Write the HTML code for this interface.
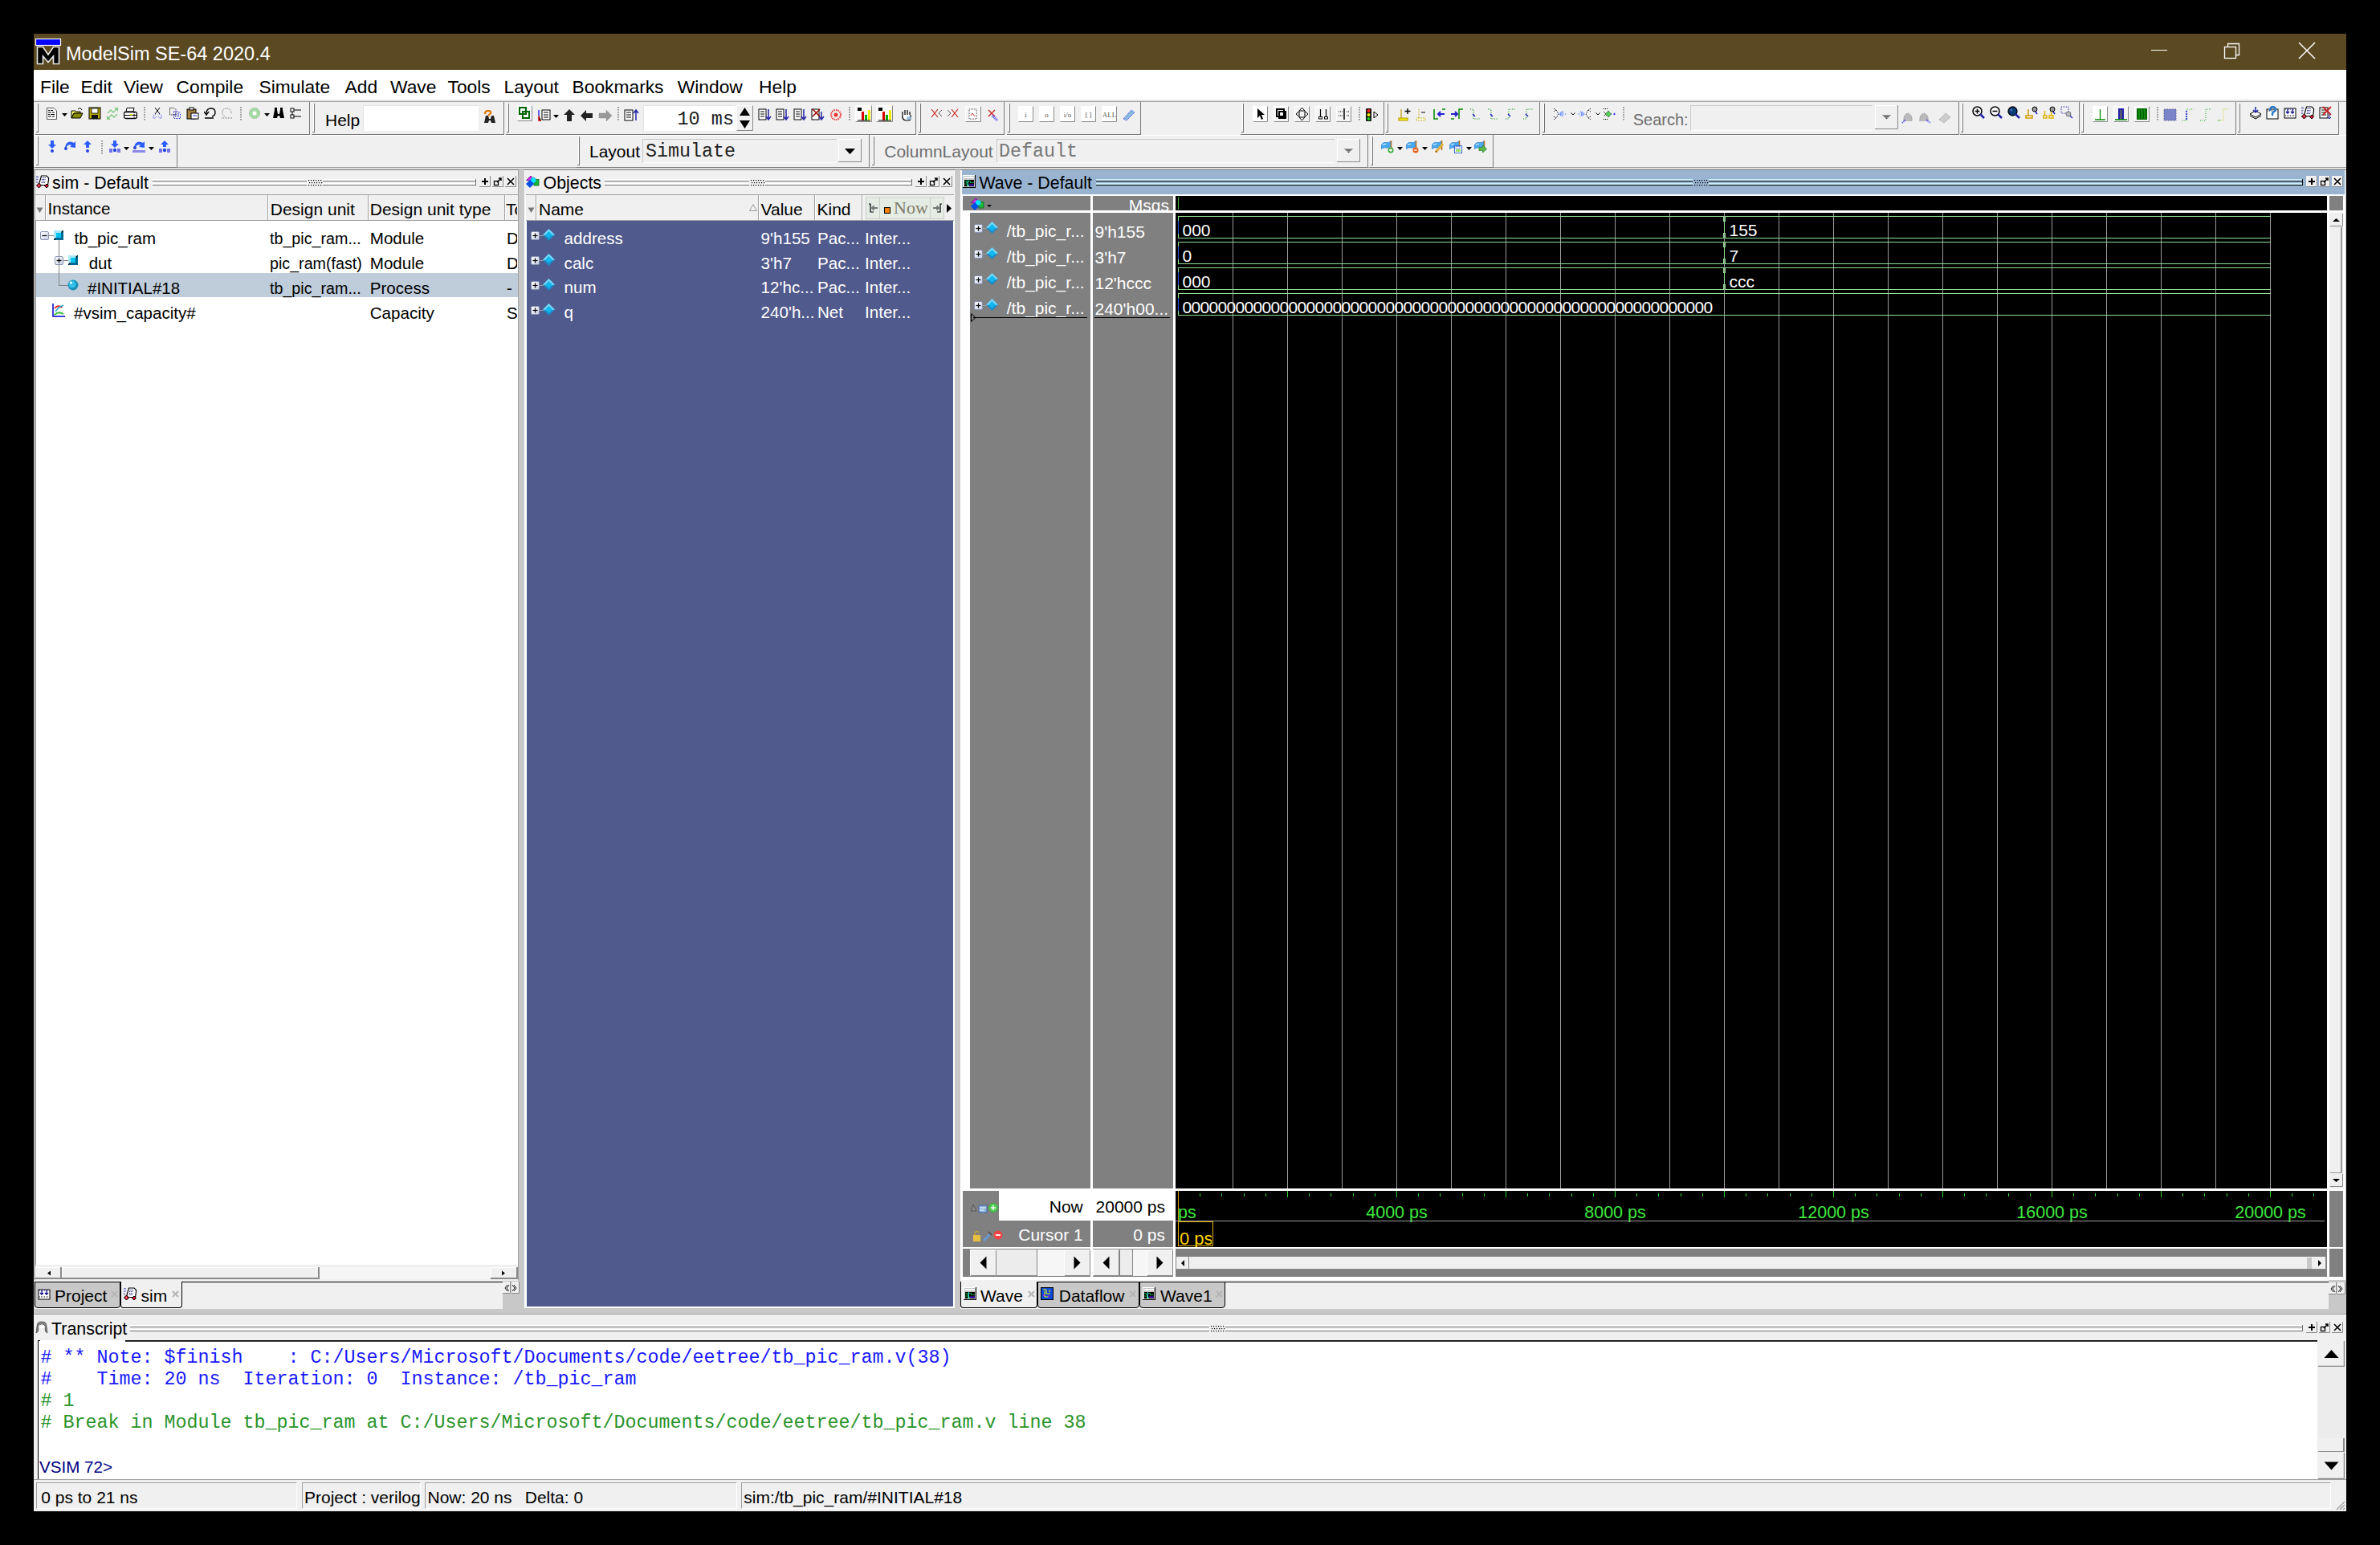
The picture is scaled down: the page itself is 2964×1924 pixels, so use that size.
<!DOCTYPE html><html><head><meta charset="utf-8"><style>
html,body{margin:0;padding:0;}
body{width:2964px;height:1924px;background:#000;position:relative;overflow:hidden;}
.a{position:absolute;}
.t{position:absolute;white-space:pre;}
</style></head><body>
<div class="a" style="left:42px;top:42px;width:2880px;height:1840px;background:#f0f0f0;"></div>
<div class="a" style="left:42px;top:42px;width:2880px;height:45px;background:#5b4922;"></div>
<svg class="a" style="left:44px;top:47px;" width="33" height="35" viewBox="0 0 33 35"><rect x="0.5" y="1.5" width="31" height="8" fill="#0000ff" stroke="#fff" stroke-width="1.2"/><path d="M2.5 11.5 H9.5 L16 21 L22.5 11.5 H29.5 V32.5 H22.5 V23 L16 30.5 L9.5 23 V32.5 H2.5 Z" fill="#000" stroke="#e6e6e6" stroke-width="1.6" stroke-linejoin="miter"/></svg>
<div class="t" style="top:55.86px;font-family:'Liberation Sans',sans-serif;font-size:23.5px;line-height:23.5px;color:#fff;left:82px;">ModelSim&nbsp;SE-64&nbsp;2020.4</div>
<div class="a" style="left:2679px;top:62px;width:20px;height:1px;background:#fff;"></div>
<svg class="a" style="left:2768px;top:52px;" width="24" height="24" viewBox="0 0 24 24"><rect x="2.5" y="6.5" width="14" height="14" fill="none" stroke="#fff" stroke-width="1.3"/><path d="M6.5 6.5 V2.5 H20.5 V16.5 H16.5" fill="none" stroke="#fff" stroke-width="1.3"/></svg>
<svg class="a" style="left:2861px;top:51px;" width="24" height="24" viewBox="0 0 24 24"><path d="M2 2 L22 22 M22 2 L2 22" stroke="#fff" stroke-width="1.5"/></svg>
<div class="a" style="left:42px;top:87px;width:2880px;height:37px;background:#fff;"></div>
<div class="a" style="left:42px;top:124px;width:2880px;height:2px;background:#e6e6e6;"></div>
<div class="t" style="top:97.46px;font-family:'Liberation Sans',sans-serif;font-size:22.8px;line-height:22.8px;color:#000;left:50px;">File</div>
<div class="t" style="top:97.46px;font-family:'Liberation Sans',sans-serif;font-size:22.8px;line-height:22.8px;color:#000;left:100.5px;">Edit</div>
<div class="t" style="top:97.46px;font-family:'Liberation Sans',sans-serif;font-size:22.8px;line-height:22.8px;color:#000;left:154px;">View</div>
<div class="t" style="top:97.46px;font-family:'Liberation Sans',sans-serif;font-size:22.8px;line-height:22.8px;color:#000;left:219.5px;">Compile</div>
<div class="t" style="top:97.46px;font-family:'Liberation Sans',sans-serif;font-size:22.8px;line-height:22.8px;color:#000;left:322.5px;">Simulate</div>
<div class="t" style="top:97.46px;font-family:'Liberation Sans',sans-serif;font-size:22.8px;line-height:22.8px;color:#000;left:429.5px;">Add</div>
<div class="t" style="top:97.46px;font-family:'Liberation Sans',sans-serif;font-size:22.8px;line-height:22.8px;color:#000;left:486px;">Wave</div>
<div class="t" style="top:97.46px;font-family:'Liberation Sans',sans-serif;font-size:22.8px;line-height:22.8px;color:#000;left:557.5px;">Tools</div>
<div class="t" style="top:97.46px;font-family:'Liberation Sans',sans-serif;font-size:22.8px;line-height:22.8px;color:#000;left:627.5px;">Layout</div>
<div class="t" style="top:97.46px;font-family:'Liberation Sans',sans-serif;font-size:22.8px;line-height:22.8px;color:#000;left:712.5px;">Bookmarks</div>
<div class="t" style="top:97.46px;font-family:'Liberation Sans',sans-serif;font-size:22.8px;line-height:22.8px;color:#000;left:843.75px;">Window</div>
<div class="t" style="top:97.46px;font-family:'Liberation Sans',sans-serif;font-size:22.8px;line-height:22.8px;color:#000;left:945px;">Help</div>
<div class="a" style="left:42px;top:126px;width:2880px;height:1px;background:#a0a0a0;"></div>
<div class="a" style="left:42px;top:127px;width:2880px;height:82px;background:#f0f0f0;"></div>
<div class="a" style="left:42px;top:168px;width:2880px;height:1px;background:#fff;"></div>
<div class="a" style="left:42px;top:208px;width:2880px;height:1px;background:#a0a0a0;"></div>
<div class="a" style="left:42px;top:209px;width:2880px;height:1px;background:#fff;"></div>
<div class="a" style="left:42px;top:210px;width:2880px;height:1px;background:#a0a0a0;"></div>
<div class="a" style="left:44px;top:167px;width:342px;height:1px;background:#7a7a7a;"></div>
<div class="a" style="left:385px;top:127px;width:1px;height:41px;background:#7a7a7a;"></div>
<div class="a" style="left:46px;top:129px;width:1px;height:36px;background:#fff;"></div>
<div class="a" style="left:47px;top:129px;width:1px;height:36px;background:#707070;"></div>
<div class="a" style="left:45px;top:164px;width:3px;height:1px;background:#707070;"></div>
<div class="a" style="left:387.5px;top:167px;width:240.5px;height:1px;background:#7a7a7a;"></div>
<div class="a" style="left:627px;top:127px;width:1px;height:41px;background:#7a7a7a;"></div>
<div class="a" style="left:389.5px;top:129px;width:1.0px;height:36px;background:#fff;"></div>
<div class="a" style="left:390.5px;top:129px;width:1.0px;height:36px;background:#707070;"></div>
<div class="a" style="left:388.5px;top:164px;width:3.0px;height:1px;background:#707070;"></div>
<div class="a" style="left:629.5px;top:167px;width:511.5px;height:1px;background:#7a7a7a;"></div>
<div class="a" style="left:1140px;top:127px;width:1px;height:41px;background:#7a7a7a;"></div>
<div class="a" style="left:631.5px;top:129px;width:1.0px;height:36px;background:#fff;"></div>
<div class="a" style="left:632.5px;top:129px;width:1.0px;height:36px;background:#707070;"></div>
<div class="a" style="left:630.5px;top:164px;width:3.0px;height:1px;background:#707070;"></div>
<div class="a" style="left:1143px;top:167px;width:108px;height:1px;background:#7a7a7a;"></div>
<div class="a" style="left:1250px;top:127px;width:1px;height:41px;background:#7a7a7a;"></div>
<div class="a" style="left:1145px;top:129px;width:1px;height:36px;background:#fff;"></div>
<div class="a" style="left:1146px;top:129px;width:1px;height:36px;background:#707070;"></div>
<div class="a" style="left:1144px;top:164px;width:3px;height:1px;background:#707070;"></div>
<div class="a" style="left:1253.75px;top:167px;width:167.25px;height:1px;background:#7a7a7a;"></div>
<div class="a" style="left:1420px;top:127px;width:1px;height:41px;background:#7a7a7a;"></div>
<div class="a" style="left:1255.75px;top:129px;width:1.0px;height:36px;background:#fff;"></div>
<div class="a" style="left:1256.75px;top:129px;width:1.0px;height:36px;background:#707070;"></div>
<div class="a" style="left:1254.75px;top:164px;width:3.0px;height:1px;background:#707070;"></div>
<div class="a" style="left:1545px;top:167px;width:179px;height:1px;background:#7a7a7a;"></div>
<div class="a" style="left:1723px;top:127px;width:1px;height:41px;background:#7a7a7a;"></div>
<div class="a" style="left:1547px;top:129px;width:1px;height:36px;background:#fff;"></div>
<div class="a" style="left:1548px;top:129px;width:1px;height:36px;background:#707070;"></div>
<div class="a" style="left:1546px;top:164px;width:3px;height:1px;background:#707070;"></div>
<div class="a" style="left:1725px;top:167px;width:193px;height:1px;background:#7a7a7a;"></div>
<div class="a" style="left:1917px;top:127px;width:1px;height:41px;background:#7a7a7a;"></div>
<div class="a" style="left:1727px;top:129px;width:1px;height:36px;background:#fff;"></div>
<div class="a" style="left:1728px;top:129px;width:1px;height:36px;background:#707070;"></div>
<div class="a" style="left:1726px;top:164px;width:3px;height:1px;background:#707070;"></div>
<div class="a" style="left:1920px;top:167px;width:519.5px;height:1px;background:#7a7a7a;"></div>
<div class="a" style="left:2438.5px;top:127px;width:1.0px;height:41px;background:#7a7a7a;"></div>
<div class="a" style="left:1922px;top:129px;width:1px;height:36px;background:#fff;"></div>
<div class="a" style="left:1923px;top:129px;width:1px;height:36px;background:#707070;"></div>
<div class="a" style="left:1921px;top:164px;width:3px;height:1px;background:#707070;"></div>
<div class="a" style="left:2441px;top:167px;width:148.5px;height:1px;background:#7a7a7a;"></div>
<div class="a" style="left:2588.5px;top:127px;width:1.0px;height:41px;background:#7a7a7a;"></div>
<div class="a" style="left:2443px;top:129px;width:1px;height:36px;background:#fff;"></div>
<div class="a" style="left:2444px;top:129px;width:1px;height:36px;background:#707070;"></div>
<div class="a" style="left:2442px;top:164px;width:3px;height:1px;background:#707070;"></div>
<div class="a" style="left:2591px;top:167px;width:193.5px;height:1px;background:#7a7a7a;"></div>
<div class="a" style="left:2783.5px;top:127px;width:1.0px;height:41px;background:#7a7a7a;"></div>
<div class="a" style="left:2593px;top:129px;width:1px;height:36px;background:#fff;"></div>
<div class="a" style="left:2594px;top:129px;width:1px;height:36px;background:#707070;"></div>
<div class="a" style="left:2592px;top:164px;width:3px;height:1px;background:#707070;"></div>
<div class="a" style="left:2786px;top:167px;width:127px;height:1px;background:#7a7a7a;"></div>
<div class="a" style="left:2912px;top:127px;width:1px;height:41px;background:#7a7a7a;"></div>
<div class="a" style="left:2788px;top:129px;width:1px;height:36px;background:#fff;"></div>
<div class="a" style="left:2789px;top:129px;width:1px;height:36px;background:#707070;"></div>
<div class="a" style="left:2787px;top:164px;width:3px;height:1px;background:#707070;"></div>
<div class="a" style="left:44px;top:208px;width:176.5px;height:1px;background:#7a7a7a;"></div>
<div class="a" style="left:219.5px;top:168px;width:1.0px;height:41px;background:#7a7a7a;"></div>
<div class="a" style="left:46px;top:170px;width:1px;height:36px;background:#fff;"></div>
<div class="a" style="left:47px;top:170px;width:1px;height:36px;background:#707070;"></div>
<div class="a" style="left:45px;top:205px;width:3px;height:1px;background:#707070;"></div>
<div class="a" style="left:717.5px;top:208px;width:365.0px;height:1px;background:#7a7a7a;"></div>
<div class="a" style="left:1081.5px;top:168px;width:1.0px;height:41px;background:#7a7a7a;"></div>
<div class="a" style="left:719.5px;top:170px;width:1.0px;height:36px;background:#fff;"></div>
<div class="a" style="left:720.5px;top:170px;width:1.0px;height:36px;background:#707070;"></div>
<div class="a" style="left:718.5px;top:205px;width:3.0px;height:1px;background:#707070;"></div>
<div class="a" style="left:1085px;top:208px;width:619px;height:1px;background:#7a7a7a;"></div>
<div class="a" style="left:1703px;top:168px;width:1px;height:41px;background:#7a7a7a;"></div>
<div class="a" style="left:1087px;top:170px;width:1px;height:36px;background:#fff;"></div>
<div class="a" style="left:1088px;top:170px;width:1px;height:36px;background:#707070;"></div>
<div class="a" style="left:1086px;top:205px;width:3px;height:1px;background:#707070;"></div>
<div class="a" style="left:1706px;top:208px;width:153.5px;height:1px;background:#7a7a7a;"></div>
<div class="a" style="left:1858.5px;top:168px;width:1.0px;height:41px;background:#7a7a7a;"></div>
<div class="a" style="left:1708px;top:170px;width:1px;height:36px;background:#fff;"></div>
<div class="a" style="left:1709px;top:170px;width:1px;height:36px;background:#707070;"></div>
<div class="a" style="left:1707px;top:205px;width:3px;height:1px;background:#707070;"></div>
<svg class="a" style="left:57px;top:133px;" width="17" height="17" viewBox="0 0 17 17"><path d="M1.5 1.5 H10 L13.5 5 V15.5 H1.5 Z" fill="#fff" stroke="#555"/><path d="M3 4.5 H5 M6 4.5 H9 M3 7 H7 M8 7 H11 M3 9.5 H5 M6 9.5 H11 M3 12 H7 M8 12 H11" stroke="#000" stroke-width="1.2"/></svg>
<svg class="a" style="left:77px;top:141px;" width="7" height="4" viewBox="0 0 7 4"><path d="M0 0 H7 L3.5 4 Z" fill="#000"/></svg>
<svg class="a" style="left:88px;top:133px;" width="17" height="17" viewBox="0 0 17 17"><path d="M1 5 H6 L7 6 H12 V8 H4 L1 14 Z" fill="#ffff66" stroke="#000"/><path d="M1 14 L4 8 H15 L12 14 Z" fill="#8a8a00" stroke="#000"/><path d="M9 3 Q12 0 14 4" fill="none" stroke="#000"/></svg>
<svg class="a" style="left:110px;top:133px;" width="17" height="17" viewBox="0 0 17 17"><rect x="1" y="1" width="14" height="14" fill="#b8a800" stroke="#000"/><rect x="4" y="2" width="8" height="6" fill="#fff" stroke="#000" stroke-width=".8"/><rect x="4" y="10" width="8" height="5" fill="#111"/></svg>
<svg class="a" style="left:132px;top:133px;" width="17" height="17" viewBox="0 0 17 17"><path d="M1 8 L6 3 L9 6 L12 3 L10 1 H15 V6 L13 4 L9 8 L6 5 L3 8 Z" fill="#6cbf6c" opacity=".8"/><path d="M15 9 L10 14 L7 11 L4 14 L6 16 H1 V11 L3 13 L7 9 L10 12 L13 9 Z" fill="#6cbf6c" opacity=".8"/></svg>
<svg class="a" style="left:154px;top:133px;" width="17" height="17" viewBox="0 0 17 17"><path d="M4 1.5 H13 L12 6 H3 Z" fill="#fff" stroke="#000"/><path d="M2 6.5 H15 Q16.5 7 16.5 9 V12 Q16.5 14.5 14 14.5 H3 Q0.5 14.5 0.5 12 V9 Q0.5 6.5 2 6.5 Z" fill="#fff" stroke="#000" stroke-width="1.3"/><path d="M1 10.5 H16" stroke="#000"/><rect x="8" y="9" width="3" height="1.5" fill="#ee0"/><path d="M13 7 V14" stroke="#000" stroke-dasharray="1 1"/></svg>
<svg class="a" style="left:179px;top:133px;" width="2" height="18" viewBox="0 0 2 18"><path d="M1 0 V18" stroke="#333" stroke-width="1" stroke-dasharray="1.5 1.5"/></svg>
<svg class="a" style="left:189px;top:133px;" width="17" height="17" viewBox="0 0 17 17"><path d="M4 1 L10 9 M10 1 L4 9" stroke="#000" stroke-width="1"/><path d="M5 9 Q1 10 2 14 Q4 15 6 12 M9 9 Q13 10 12 14 Q10 15 8 12" stroke="#22f" fill="none" stroke-dasharray="1 1"/></svg>
<svg class="a" style="left:210px;top:133px;" width="17" height="17" viewBox="0 0 17 17"><path d="M1.5 1.5 H7 L9 3.5 V10 H1.5 Z" fill="none" stroke="#000" stroke-dasharray="1 1"/><path d="M6.5 5.5 H12 L14.5 8 V14.5 H6.5 Z" fill="none" stroke="#1a1acc" stroke-dasharray="1 1"/><path d="M8 8 H13 M8 10 H13 M8 12 H13" stroke="#1a1acc" stroke-dasharray="1 1"/></svg>
<svg class="a" style="left:232px;top:133px;" width="17" height="17" viewBox="0 0 17 17"><rect x="1" y="3" width="11" height="12" fill="#a08040" stroke="#000"/><rect x="4" y="1" width="5" height="3" fill="#fff" stroke="#000"/><rect x="6" y="8" width="9" height="7" fill="#fff" stroke="#000"/><path d="M8 11 H13" stroke="#33f"/></svg>
<svg class="a" style="left:254px;top:133px;" width="17" height="17" viewBox="0 0 17 17"><path d="M3 8 Q3 2 9 2 Q14 2 14 7 Q14 11 10 12" fill="none" stroke="#000" stroke-width="1.4"/><path d="M0 6 L3 10 L6 6" fill="none" stroke="#000" stroke-width="1.4"/><path d="M1 14 H12" stroke="#000" stroke-width="1.5"/></svg>
<svg class="a" style="left:275px;top:133px;" width="17" height="17" viewBox="0 0 17 17"><path d="M13 8 Q13 2 7 2 Q2 2 2 7 Q2 11 6 12" fill="none" stroke="#666" stroke-width="1" stroke-dasharray="1 1"/><path d="M1 14 H14" stroke="#666" stroke-dasharray="1 1"/></svg>
<svg class="a" style="left:299px;top:133px;" width="2" height="18" viewBox="0 0 2 18"><path d="M1 0 V18" stroke="#333" stroke-width="1" stroke-dasharray="1.5 1.5"/></svg>
<svg class="a" style="left:309px;top:133px;" width="17" height="17" viewBox="0 0 17 17"><circle cx="8" cy="8" r="6.5" fill="#a8d8a8" stroke="#6b6" stroke-dasharray="1.3 1"/><circle cx="8" cy="8" r="2.5" fill="#fff"/></svg>
<svg class="a" style="left:329px;top:141px;" width="7" height="4" viewBox="0 0 7 4"><path d="M0 0 H7 L3.5 4 Z" fill="#000"/></svg>
<svg class="a" style="left:339px;top:133px;" width="17" height="17" viewBox="0 0 17 17"><path d="M1 14 L3 4 H6 L7 9 H9 L10 4 H13 L15 14 H10 L9 11 H7 L6 14 Z" fill="#000"/><rect x="3" y="1" width="3" height="3" fill="#000"/><rect x="10" y="1" width="3" height="3" fill="#000"/></svg>
<svg class="a" style="left:361px;top:133px;" width="17" height="17" viewBox="0 0 17 17"><rect x="1" y="2" width="4" height="4" fill="#fff" stroke="#000"/><rect x="1" y="10" width="4" height="4" fill="#fff" stroke="#000"/><path d="M5 4 H14 M5 12 H14 M3 6 V10" stroke="#000"/></svg>
<div class="t" style="top:138.50px;font-family:'Liberation Sans',sans-serif;font-size:21px;line-height:21px;color:#000;left:405px;">Help</div>
<div class="a" style="left:452px;top:131px;width:144px;height:32px;background:#fff;"></div>
<div class="a" style="left:452px;top:131px;width:144px;height:1px;background:#e3e3e3;"></div>
<div class="a" style="left:452px;top:131px;width:1px;height:32px;background:#e3e3e3;"></div>
<svg class="a" style="left:602px;top:137px;" width="17" height="17" viewBox="0 0 17 17"><path d="M1 16 L3 7 H6 L7 11 H9 L10 7 H13 L15 16 H10 L9 13 H7 L6 16 Z" fill="#222"/><path d="M2 5 Q2 1 6 1 Q10 1 9 4 L6 7" fill="none" stroke="#e67300" stroke-width="2.2"/></svg>
<svg class="a" style="left:644px;top:131px;" width="20" height="21" viewBox="0 0 20 21"><rect x="0" y="0" width="19" height="20" fill="#f8f8f8"/><path d="M0.5 19.5 V0.5 H18.5" stroke="#fff" fill="none"/><path d="M18.5 0.5 V19.5 H0.5" stroke="#8a8a8a" fill="none"/><rect x="3" y="3" width="8" height="8" fill="none" stroke="#060" stroke-width="2"/><rect x="7" y="8" width="8" height="8" fill="none" stroke="#060" stroke-width="2"/></svg>
<svg class="a" style="left:669px;top:134px;" width="18" height="17" viewBox="0 0 18 17"><path d="M2 3 V10" stroke="#33f" stroke-width="1.5"/><path d="M2 10 V16 H5" stroke="#c00" stroke-width="1.5"/><rect x="6" y="3" width="10" height="12" fill="#fff" stroke="#000"/><path d="M8 6 H14 M8 9 H14 M8 12 H14" stroke="#000"/></svg>
<svg class="a" style="left:689px;top:143px;" width="7" height="4" viewBox="0 0 7 4"><path d="M0 0 H7 L3.5 4 Z" fill="#000"/></svg>
<svg class="a" style="left:701px;top:135px;" width="16" height="17" viewBox="0 0 16 17"><path d="M8 1 L15 8 H11 V16 H5 V8 H1 Z" fill="#222"/></svg>
<svg class="a" style="left:722px;top:136px;" width="17" height="16" viewBox="0 0 17 16"><path d="M1 8 L8 1 V5 H16 V11 H8 V15 Z" fill="#222"/></svg>
<svg class="a" style="left:745px;top:136px;" width="18" height="16" viewBox="0 0 18 16"><path d="M17 8 L10 1 V5 H1 V11 H10 V15 Z" fill="#999" stroke="#777" stroke-width=".6" stroke-dasharray="1 1"/></svg>
<svg class="a" style="left:769px;top:133px;" width="2" height="18" viewBox="0 0 2 18"><path d="M1 0 V18" stroke="#333" stroke-width="1" stroke-dasharray="1.5 1.5"/></svg>
<svg class="a" style="left:777px;top:135px;" width="19" height="17" viewBox="0 0 19 17"><rect x="1" y="2" width="10" height="13" fill="#fff" stroke="#000"/><path d="M3 5 H9 M3 8 H9 M3 11 H9" stroke="#000"/><path d="M15 15 V3 M12 6 L15 2 L18 6" stroke="#22a" stroke-width="1.5" fill="none"/></svg>
<div class="a" style="left:801px;top:131px;width:115px;height:32px;background:#fff;"></div>
<div class="a" style="left:801px;top:131px;width:115px;height:1px;background:#e3e3e3;"></div>
<div class="a" style="left:801px;top:131px;width:1px;height:32px;background:#e3e3e3;"></div>
<div class="t" style="top:137.34px;font-family:'Liberation Mono',monospace;font-size:23.5px;line-height:23.5px;color:#222;right:2050px;text-align:right;">10&nbsp;ms</div>
<svg class="a" style="left:917px;top:131px;" width="21" height="32" viewBox="0 0 21 32"><rect x="0" y="0" width="21" height="32" fill="#f0f0f0"/><path d="M0.5 31.5 V0.5 H20.5" stroke="#fff" fill="none"/><path d="M20.5 0.5 V31.5 H0.5" stroke="#8a8a8a" fill="none"/><path d="M10.5 3 L17 13 H4 Z M10.5 29 L17 19 H4 Z" fill="#000"/></svg>
<svg class="a" style="left:944px;top:134px;" width="18" height="17" viewBox="0 0 18 17"><rect x="1" y="2" width="9" height="13" fill="#fff" stroke="#000"/><path d="M3 5 H8 M3 8 H8 M3 11 H8" stroke="#000"/><path d="M13 2 V15 M10 11 L13 15 L16 11" stroke="#22a" stroke-width="1.5" fill="none"/></svg>
<svg class="a" style="left:966px;top:134px;" width="18" height="17" viewBox="0 0 18 17"><rect x="1" y="2" width="9" height="13" fill="#fff" stroke="#000"/><path d="M3 5 H8 M3 8 H8 M3 11 H8" stroke="#000"/><path d="M13 2 V15 M10 11 L13 15 L16 11" stroke="#22a" stroke-width="1.5" fill="none"/></svg>
<svg class="a" style="left:988px;top:134px;" width="18" height="17" viewBox="0 0 18 17"><rect x="1" y="2" width="9" height="13" fill="#fff" stroke="#000"/><path d="M3 5 H8 M3 8 H8 M3 11 H8" stroke="#000"/><path d="M13 2 V15 M10 11 L13 15 L16 11" stroke="#22a" stroke-width="1.5" fill="none"/></svg>
<svg class="a" style="left:1010px;top:134px;" width="18" height="17" viewBox="0 0 18 17"><rect x="1" y="2" width="9" height="13" fill="#fff" stroke="#000"/><path d="M2 2 L11 11 M11 2 L2 11" stroke="#900" stroke-width="1.5"/><path d="M13 5 V15 M10 11 L13 15 L16 11" stroke="#22a" stroke-width="1.5" fill="none"/></svg>
<svg class="a" style="left:1034px;top:135px;" width="15" height="16" viewBox="0 0 15 16"><circle cx="7" cy="8" r="6" fill="none" stroke="#e33" stroke-width="2" stroke-dasharray="1.5 1"/><circle cx="7" cy="8" r="2.5" fill="#e33"/></svg>
<svg class="a" style="left:1057px;top:133px;" width="2" height="18" viewBox="0 0 2 18"><path d="M1 0 V18" stroke="#333" stroke-width="1" stroke-dasharray="1.5 1.5"/></svg>
<svg class="a" style="left:1065px;top:131px;" width="22" height="22" viewBox="0 0 22 22"><rect x="0" y="0" width="21" height="21" fill="#f8f8f8"/><path d="M0.5 20.5 V0.5 H20.5" stroke="#fff" fill="none"/><path d="M20.5 0.5 V20.5 H0.5" stroke="#8a8a8a" fill="none"/><rect x="3" y="3" width="5" height="4" fill="#000"/><rect x="8" y="8" width="3" height="11" fill="#d00"/><rect x="12" y="12" width="3" height="7" fill="#0a0"/><rect x="16" y="6" width="3" height="13" fill="#ee0"/><path d="M3 19 H19" stroke="#000"/></svg>
<svg class="a" style="left:1091px;top:131px;" width="22" height="22" viewBox="0 0 22 22"><rect x="0" y="0" width="21" height="21" fill="#f8f8f8"/><path d="M0.5 20.5 V0.5 H20.5" stroke="#fff" fill="none"/><path d="M20.5 0.5 V20.5 H0.5" stroke="#8a8a8a" fill="none"/><rect x="3" y="3" width="5" height="4" fill="#000"/><rect x="8" y="8" width="3" height="11" fill="#d00"/><rect x="12" y="12" width="3" height="7" fill="#0a0"/><rect x="16" y="6" width="3" height="13" fill="#ee0"/><path d="M3 19 H19" stroke="#000"/></svg>
<svg class="a" style="left:1121px;top:135px;" width="16" height="17" viewBox="0 0 16 17"><path d="M3 8 V4 M6 8 V2 M9 8 V2 M12 8 V4 M3 8 Q2 14 7 15 H11 Q14 14 13 8" fill="#fff" stroke="#000" stroke-width="1.2"/><ellipse cx="11" cy="12" rx="3" ry="2" fill="#9bd"/></svg>
<svg class="a" style="left:1159px;top:134px;" width="16" height="14" viewBox="0 0 16 14"><path d="M1 2 L9 12 M9 2 L1 12" stroke="#c22" stroke-width="1.2"/><path d="M14 3 L10 7 L14 11" stroke="#555" fill="none"/></svg>
<svg class="a" style="left:1179px;top:134px;" width="16" height="14" viewBox="0 0 16 14"><path d="M6 2 L14 12 M14 2 L6 12" stroke="#c22" stroke-width="1.2"/><path d="M1 3 L5 7 L1 11" stroke="#555" fill="none"/></svg>
<svg class="a" style="left:1202px;top:132px;" width="21" height="21" viewBox="0 0 21 21"><rect x="0" y="0" width="20" height="20" fill="#f4f4f4"/><path d="M0.5 19.5 V0.5 H19.5" stroke="#fff" fill="none"/><path d="M19.5 0.5 V19.5 H0.5" stroke="#8a8a8a" fill="none"/><rect x="5" y="4" width="9" height="12" fill="#fff" stroke="#444" stroke-dasharray="1 1"/><path d="M7 12 L9 9 L12 13" stroke="#c33" fill="none"/></svg>
<svg class="a" style="left:1230px;top:135px;" width="17" height="17" viewBox="0 0 17 17"><path d="M1 2 L9 10 M9 2 L1 10" stroke="#c22" stroke-width="1.3"/><path d="M6 9 L12 15" stroke="#33f" stroke-width="3" stroke-dasharray="1 1"/></svg>
<svg class="a" style="left:1268px;top:132px;" width="20" height="21" viewBox="0 0 20 21"><rect x="0" y="0" width="19" height="20" fill="#fff"/><path d="M0.5 19.5 V0.5 H18.5" stroke="#fff" fill="none"/><path d="M18.5 0.5 V19.5 H0.5" stroke="#8a8a8a" fill="none"/><text x="9.5" y="14" font-family="Liberation Serif" font-size="9" text-anchor="middle" fill="#555">i</text></svg>
<svg class="a" style="left:1294px;top:132px;" width="20" height="21" viewBox="0 0 20 21"><rect x="0" y="0" width="19" height="20" fill="#fff"/><path d="M0.5 19.5 V0.5 H18.5" stroke="#fff" fill="none"/><path d="M18.5 0.5 V19.5 H0.5" stroke="#8a8a8a" fill="none"/><text x="9.5" y="14" font-family="Liberation Serif" font-size="9" text-anchor="middle" fill="#555">o</text></svg>
<svg class="a" style="left:1320px;top:132px;" width="20" height="21" viewBox="0 0 20 21"><rect x="0" y="0" width="19" height="20" fill="#fff"/><path d="M0.5 19.5 V0.5 H18.5" stroke="#fff" fill="none"/><path d="M18.5 0.5 V19.5 H0.5" stroke="#8a8a8a" fill="none"/><text x="9.5" y="14" font-family="Liberation Serif" font-size="9" text-anchor="middle" fill="#555">i/o</text></svg>
<svg class="a" style="left:1346px;top:132px;" width="20" height="21" viewBox="0 0 20 21"><rect x="0" y="0" width="19" height="20" fill="#fff"/><path d="M0.5 19.5 V0.5 H18.5" stroke="#fff" fill="none"/><path d="M18.5 0.5 V19.5 H0.5" stroke="#8a8a8a" fill="none"/><text x="9.5" y="14" font-family="Liberation Serif" font-size="9" text-anchor="middle" fill="#555">[ ]</text></svg>
<svg class="a" style="left:1372px;top:132px;" width="20" height="21" viewBox="0 0 20 21"><rect x="0" y="0" width="19" height="20" fill="#fff"/><path d="M0.5 19.5 V0.5 H18.5" stroke="#fff" fill="none"/><path d="M18.5 0.5 V19.5 H0.5" stroke="#8a8a8a" fill="none"/><text x="9.5" y="14" font-family="Liberation Serif" font-size="9" text-anchor="middle" fill="#555">ALL</text></svg>
<svg class="a" style="left:1397px;top:134px;" width="18" height="17" viewBox="0 0 18 17"><path d="M2 14 L12 3 L16 6 L6 16 Z" fill="#8bd" stroke="#33f" stroke-dasharray="1 1"/></svg>
<svg class="a" style="left:1560px;top:132px;" width="20" height="21" viewBox="0 0 20 21"><rect x="0" y="0" width="19" height="20" fill="#fff"/><path d="M0.5 19.5 V0.5 H18.5" stroke="#fff" fill="none"/><path d="M18.5 0.5 V19.5 H0.5" stroke="#8a8a8a" fill="none"/><path d="M6 3 V15 L9 12 L11 17 L13 16 L11 11 H15 Z" fill="#000"/></svg>
<svg class="a" style="left:1586px;top:132px;" width="20" height="21" viewBox="0 0 20 21"><rect x="0" y="0" width="19" height="20" fill="#f4f4f4"/><path d="M0.5 19.5 V0.5 H18.5" stroke="#fff" fill="none"/><path d="M18.5 0.5 V19.5 H0.5" stroke="#8a8a8a" fill="none"/><rect x="4" y="4" width="9" height="9" fill="none" stroke="#000" stroke-width="2"/><rect x="7" y="7" width="8" height="8" fill="none" stroke="#000" stroke-width="2"/></svg>
<svg class="a" style="left:1612px;top:132px;" width="20" height="21" viewBox="0 0 20 21"><rect x="0" y="0" width="19" height="20" fill="#f4f4f4"/><path d="M0.5 19.5 V0.5 H18.5" stroke="#fff" fill="none"/><path d="M18.5 0.5 V19.5 H0.5" stroke="#8a8a8a" fill="none"/><path d="M9.5 2 L13 6 H6 Z M9.5 18 L13 14 H6 Z M2 10 L6 6.5 V13.5 Z M17 10 L13 6.5 V13.5 Z" fill="none" stroke="#000"/></svg>
<svg class="a" style="left:1638px;top:132px;" width="20" height="21" viewBox="0 0 20 21"><rect x="0" y="0" width="19" height="20" fill="#f4f4f4"/><path d="M0.5 19.5 V0.5 H18.5" stroke="#fff" fill="none"/><path d="M18.5 0.5 V19.5 H0.5" stroke="#8a8a8a" fill="none"/><path d="M6.5 4 V13 M13.5 4 V13" stroke="#000" stroke-width="1.2"/><rect x="4.5" y="13.5" width="4" height="2.5" fill="#fff" stroke="#000"/><rect x="11.5" y="13.5" width="4" height="2.5" fill="#fff" stroke="#000"/></svg>
<svg class="a" style="left:1664px;top:132px;" width="20" height="21" viewBox="0 0 20 21"><rect x="0" y="0" width="19" height="20" fill="#f4f4f4"/><path d="M0.5 19.5 V0.5 H18.5" stroke="#fff" fill="none"/><path d="M18.5 0.5 V19.5 H0.5" stroke="#8a8a8a" fill="none"/><path d="M10 3 V17" stroke="#000" stroke-width="1.5"/><path d="M3 7 H8 M13 7 H17 M3 12 H8 M13 12 H17" stroke="#000" stroke-dasharray="1 1"/></svg>
<svg class="a" style="left:1692px;top:133px;" width="2" height="18" viewBox="0 0 2 18"><path d="M1 0 V18" stroke="#333" stroke-width="1" stroke-dasharray="1.5 1.5"/></svg>
<svg class="a" style="left:1700px;top:134px;" width="18" height="18" viewBox="0 0 18 18"><rect x="1" y="1" width="7" height="16" rx="1" fill="#111"/><circle cx="4.5" cy="4" r="2" fill="#f22"/><circle cx="4.5" cy="9" r="2" fill="#ee0"/><circle cx="4.5" cy="14" r="2" fill="#2c2"/><path d="M11 5 L16 9 L11 13 Z" fill="none" stroke="#000"/></svg>
<svg class="a" style="left:1741px;top:134px;" width="17" height="17" viewBox="0 0 17 17"><path d="M4 2 V13 M1 13 H12 V16 H1 Z" stroke="#b90" fill="#ee0" stroke-width="1.2"/><path d="M12 1 V8 M8.5 4.5 H15.5" stroke="#000" stroke-width="1.4"/></svg>
<svg class="a" style="left:1763px;top:134px;" width="17" height="17" viewBox="0 0 17 17"><path d="M4 2 V13 M1 13 H12 V16 H1 Z" stroke="#b90" fill="#ffd" stroke-width="1" stroke-dasharray="1 1"/><path d="M7 6 H12" stroke="#000"/></svg>
<svg class="a" style="left:1785px;top:134px;" width="17" height="17" viewBox="0 0 17 17"><path d="M1 2 V14 H6 M15 2 H11" stroke="#080" stroke-width="1.5" fill="none"/><path d="M14 8 H6 M9 5 L6 8 L9 11" stroke="#22c" stroke-width="2" fill="none"/></svg>
<svg class="a" style="left:1806px;top:134px;" width="17" height="17" viewBox="0 0 17 17"><path d="M1 14 H5 M11 14 V2 H16" stroke="#080" stroke-width="1.5" fill="none"/><path d="M1 8 H9 M6 5 L9 8 L6 11" stroke="#22c" stroke-width="2" fill="none"/></svg>
<svg class="a" style="left:1829px;top:134px;" width="17" height="17" viewBox="0 0 17 17"><path d="M2 2 H6 V14 H15" stroke="#080" fill="none" stroke-dasharray="1 1.5"/><path d="M5 8 L8 11" stroke="#22c" stroke-width="1.5"/></svg>
<svg class="a" style="left:1851px;top:134px;" width="17" height="17" viewBox="0 0 17 17"><path d="M2 2 H6 V14 H15" stroke="#080" fill="none" stroke-dasharray="1 1.5"/><path d="M5 8 L8 11" stroke="#22c" stroke-width="1.5"/></svg>
<svg class="a" style="left:1873px;top:134px;" width="17" height="17" viewBox="0 0 17 17"><path d="M2 14 H6 V2 H15" stroke="#080" fill="none" stroke-dasharray="1 1.5"/><path d="M5 8 L8 11" stroke="#22c" stroke-width="1.5"/></svg>
<svg class="a" style="left:1895px;top:134px;" width="17" height="17" viewBox="0 0 17 17"><path d="M2 14 H6 V2 H15" stroke="#080" fill="none" stroke-dasharray="1 1.5"/><path d="M5 8 L8 11" stroke="#22c" stroke-width="1.5"/></svg>
<svg class="a" style="left:1934px;top:134px;" width="17" height="16" viewBox="0 0 17 16"><path d="M1 1 L4 3 L1 5 M1 11 L4 13 L1 15 M4 3 L7 8 L4 13" stroke="#000" fill="none" stroke-dasharray="1 1"/><path d="M16 8 H8 M11 5 L8 8 L11 11 M13 5 L10 8 L13 11" stroke="#3a6aff" stroke-width="1.2" fill="none" stroke-dasharray="1 1"/></svg>
<svg class="a" style="left:1956px;top:140px;" width="6" height="4" viewBox="0 0 6 4"><path d="M0.5 0.5 L3 3 L5.5 0.5" stroke="#000" fill="none"/></svg>
<svg class="a" style="left:1965px;top:134px;" width="17" height="16" viewBox="0 0 17 16"><path d="M16 1 L13 3 L16 5 M16 11 L13 13 L16 15 M13 3 L10 8 L13 13" stroke="#000" fill="none" stroke-dasharray="1 1"/><path d="M0 8 H8 M5 5 L8 8 L5 11 M3 5 L6 8 L3 11" stroke="#3a6aff" stroke-width="1.2" fill="none" stroke-dasharray="1 1"/></svg>
<svg class="a" style="left:1987px;top:140px;" width="6" height="4" viewBox="0 0 6 4"><path d="M0.5 0.5 L3 3 L5.5 0.5" stroke="#000" fill="none"/></svg>
<svg class="a" style="left:1996px;top:134px;" width="17" height="16" viewBox="0 0 17 16"><path d="M1 1.5 H6 M1 14.5 H6 M1 5 L4 8 L1 11" stroke="#000" fill="none" stroke-dasharray="1 1"/><path d="M3 8 L7 4 L11 8 L7 12 Z" fill="#5c5" stroke="#000" stroke-width=".8" stroke-dasharray="1 1"/><path d="M13 8 L14.5 6.5 L16 8 L14.5 9.5 Z" fill="#33f"/></svg>
<svg class="a" style="left:2021px;top:133px;" width="2" height="18" viewBox="0 0 2 18"><path d="M1 0 V18" stroke="#333" stroke-width="1" stroke-dasharray="1.5 1.5"/></svg>
<div class="t" style="top:139.36px;font-family:'Liberation Sans',sans-serif;font-size:20px;line-height:20px;color:#6d6d6d;left:2033.75px;">Search:</div>
<div class="a" style="left:2105px;top:131px;width:227px;height:32px;background:#f0f0f0;box-sizing:border-box;border-top:1px solid #c8c8c8;border-left:1px solid #c8c8c8;border-bottom:1px solid #fff;"></div>
<svg class="a" style="left:2335px;top:131px;" width="29" height="30" viewBox="0 0 29 30"><rect x="0.5" y="0.5" width="28" height="29" fill="#f0f0f0" stroke="#fff"/><path d="M28.5 0 V29.5 H0" stroke="#888" fill="none"/><path d="M9 12 H20 L14.5 17.5 Z" fill="#444"/><path d="M10 12.5 H19 M11 14 H18 M12.5 15.5 H16.5" stroke="#f0f0f0" stroke-width=".5"/></svg>
<svg class="a" style="left:2368px;top:137px;" width="17" height="18" viewBox="0 0 17 18"><path d="M3 14 Q2 6 8 4 Q14 6 13 14" fill="#bbb" stroke="#777" stroke-dasharray="1 1"/><path d="M1 16 L5 12" stroke="#44f" stroke-width="2" stroke-dasharray="1 1"/></svg>
<svg class="a" style="left:2388px;top:137px;" width="17" height="18" viewBox="0 0 17 18"><path d="M3 14 Q2 6 8 4 Q14 6 13 14" fill="#bbb" stroke="#777" stroke-dasharray="1 1"/><path d="M11 12 L16 16" stroke="#44f" stroke-width="2" stroke-dasharray="1 1"/></svg>
<svg class="a" style="left:2413px;top:137px;" width="17" height="18" viewBox="0 0 17 18"><path d="M2 12 L10 4 L16 9 L8 16 Z" fill="#ccc" stroke="#999" stroke-dasharray="1 1"/></svg>
<svg class="a" style="left:2456px;top:132px;" width="17" height="17" viewBox="0 0 17 17"><circle cx="6.5" cy="6.5" r="5.5" fill="#fff" stroke="#000" stroke-width="1.5"/><path d="M3.5 6.5 H9.5 M6.5 3.5 V9.5" stroke="#000" stroke-width="1.6"/><path d="M10 10 L15 15" stroke="#22a" stroke-width="2.5"/></svg>
<svg class="a" style="left:2478px;top:132px;" width="17" height="17" viewBox="0 0 17 17"><circle cx="6.5" cy="6.5" r="5.5" fill="#fff" stroke="#000" stroke-width="1.5"/><path d="M3.5 6.5 H9.5" stroke="#000" stroke-width="1.6"/><path d="M10 10 L15 15" stroke="#22a" stroke-width="2.5"/></svg>
<svg class="a" style="left:2500px;top:132px;" width="17" height="17" viewBox="0 0 17 17"><circle cx="6.5" cy="6.5" r="5.5" fill="#0a3c78" stroke="#000" stroke-width="1.3"/><circle cx="5" cy="5" r="1.5" fill="#3a6cb0"/><path d="M10 10 L15 15" stroke="#22a" stroke-width="2.5"/></svg>
<svg class="a" style="left:2522px;top:132px;" width="17" height="17" viewBox="0 0 17 17"><path d="M4 4 V12 M1 12 H9 V15 H1 Z" stroke="#c90" fill="#fff" stroke-width="1.5"/><circle cx="12" cy="4" r="3" fill="#999" stroke="#000"/><path d="M13 7 L15 10" stroke="#22c" stroke-width="1.5"/></svg>
<svg class="a" style="left:2544px;top:132px;" width="17" height="17" viewBox="0 0 17 17"><path d="M2.5 6 V12 M10.5 6 V12 M0.5 12 H5 V15 H0.5 Z M8 12 H13 V15 H8 Z" stroke="#e0b000" fill="#fff" stroke-width="1.4"/><circle cx="12" cy="4" r="3" fill="#999" stroke="#000"/><path d="M13 7 L15 10" stroke="#22c" stroke-width="1.5"/></svg>
<svg class="a" style="left:2566px;top:132px;" width="17" height="17" viewBox="0 0 17 17"><rect x="1" y="1" width="9" height="8" fill="none" stroke="#33a" stroke-dasharray="1 1"/><circle cx="10" cy="10" r="3" fill="#bbb" stroke="#777"/><path d="M12 12 L15 15" stroke="#33c" stroke-width="1.5"/></svg>
<svg class="a" style="left:2606px;top:132px;" width="20" height="21" viewBox="0 0 20 21"><rect x="0" y="0" width="19" height="20" fill="#fff"/><path d="M0.5 19.5 V0.5 H18.5" stroke="#fff" fill="none"/><path d="M18.5 0.5 V19.5 H0.5" stroke="#8a8a8a" fill="none"/><path d="M9.5 4 V17 M3 17 H16" stroke="#080" stroke-width="1.3"/></svg>
<svg class="a" style="left:2632px;top:132px;" width="20" height="21" viewBox="0 0 20 21"><rect x="0" y="0" width="19" height="20" fill="#f4f4f4"/><path d="M0.5 19.5 V0.5 H18.5" stroke="#fff" fill="none"/><path d="M18.5 0.5 V19.5 H0.5" stroke="#8a8a8a" fill="none"/><rect x="6" y="3" width="7" height="14" fill="#22a" /><rect x="8" y="5" width="3" height="12" fill="#557"/><path d="M2 17 H17" stroke="#080" stroke-width="1.5"/></svg>
<svg class="a" style="left:2658px;top:132px;" width="20" height="21" viewBox="0 0 20 21"><rect x="0" y="0" width="19" height="20" fill="#f4f4f4"/><path d="M0.5 19.5 V0.5 H18.5" stroke="#fff" fill="none"/><path d="M18.5 0.5 V19.5 H0.5" stroke="#8a8a8a" fill="none"/><rect x="3" y="3" width="13" height="14" fill="#060"/><path d="M6 4 V16 M9.5 4 V16 M13 4 V16" stroke="#2a2" stroke-width="1"/></svg>
<svg class="a" style="left:2686px;top:133px;" width="2" height="18" viewBox="0 0 2 18"><path d="M1 0 V18" stroke="#333" stroke-width="1" stroke-dasharray="1.5 1.5"/></svg>
<svg class="a" style="left:2694px;top:134px;" width="17" height="17" viewBox="0 0 17 17"><rect x="1" y="2" width="15" height="14" fill="#7a84c8" stroke="#558" stroke-dasharray="1 1"/></svg>
<svg class="a" style="left:2717px;top:134px;" width="17" height="17" viewBox="0 0 17 17"><path d="M1 16 H6 V2 H15" stroke="#2a2" fill="none" stroke-dasharray="1 1.5"/><path d="M6 4 V15" stroke="#44c" stroke-width="2" stroke-dasharray="2 1"/></svg>
<svg class="a" style="left:2739px;top:134px;" width="17" height="17" viewBox="0 0 17 17"><path d="M1 16 H8 V2 H15" stroke="#2a2" fill="none" stroke-dasharray="1 1.5"/></svg>
<svg class="a" style="left:2761px;top:134px;" width="17" height="17" viewBox="0 0 17 17"><path d="M1 16 H8 V2 H15" stroke="#cc2" fill="none" stroke-dasharray="1 1.5"/><path d="M1 16 H5" stroke="#2a2" stroke-dasharray="1 1"/></svg>
<svg class="a" style="left:2801px;top:132px;" width="17" height="17" viewBox="0 0 17 17"><path d="M1 10 L8 6 L15 10 L8 14 Z" fill="#fff" stroke="#000"/><path d="M1 12 L8 16 L15 12" fill="none" stroke="#000"/><path d="M8 1 V8 M5 5 L8 8 L11 5" stroke="#22a" stroke-width="1.5" fill="none"/></svg>
<svg class="a" style="left:2822px;top:132px;" width="17" height="17" viewBox="0 0 17 17"><rect x="1" y="4" width="14" height="12" fill="#fff" stroke="#000"/><path d="M2 6 H14" stroke="#000" stroke-dasharray="1 1"/><path d="M5 6 Q5 1 9 1 Q13 2 11 6 L8 9 V12" fill="none" stroke="#27c" stroke-width="2.4"/></svg>
<svg class="a" style="left:2844px;top:132px;" width="17" height="17" viewBox="0 0 17 17"><rect x="1" y="3" width="14" height="12" fill="#fff" stroke="#000"/><path d="M2 4 H14" stroke="#22a" stroke-dasharray="1 1"/><path d="M5 4 V9 M3 7 L5 9 L7 7 M11 4 V9 M9 7 L11 9 L13 7" stroke="#118" stroke-width="1.3" fill="none"/><path d="M2 12 H14" stroke="#000" stroke-dasharray="1 1"/></svg>
<svg class="a" style="left:2866px;top:132px;" width="17" height="17" viewBox="0 0 17 17"><path d="M0 1.5 H3 M0 3.5 H3 M0 5.5 H2.5 M0 7.5 H2 M0 9.5 H2" stroke="#7a7ac8" stroke-width="1"/><path d="M6.5 1 H13 L15.5 3.5 V5.5 L14.5 12.5 H5.5 L3.5 11.5 Z" fill="#fff" stroke="#000" stroke-width="1.2"/><path d="M7.5 3.5 H12 M7 5.5 H11.5 M7 7.5 H11.5 M6.5 9.5 H11" stroke="#2a2a90" stroke-width="1" stroke-dasharray="1.2 .6"/><path d="M0.5 13 L3.5 10 L6.5 13 L3.5 16 Z M10.5 13.5 L13 11 L15.5 13.5 L13 16 Z" fill="#e0102a" stroke="#000" stroke-width="1"/><rect x="3" y="12.5" width="1" height="1" fill="#fff"/></svg>
<svg class="a" style="left:2888px;top:132px;" width="17" height="17" viewBox="0 0 17 17"><rect x="1" y="2" width="10" height="13" fill="#fff" stroke="#000"/><path d="M3 5 H9 M3 8 H9 M3 11 H9" stroke="#000"/><path d="M5 1 L15 11 M15 1 L5 11" stroke="#c22" stroke-width="1.8"/><path d="M13 10 V16 M11 14 L13 16 L15 14" stroke="#22a" fill="none"/></svg>
<svg class="a" style="left:60px;top:174px;" width="11" height="17" viewBox="0 0 11 17"><path d="M3 1 H7 V6 H10 L5 11 L0 6 H3 Z" fill="#2b5cff"/><circle cx="5" cy="14" r="2" fill="#2244dd"/></svg>
<svg class="a" style="left:79px;top:174px;" width="17" height="14" viewBox="0 0 17 14"><path d="M2 9 Q4 1 11 3 L13 4 L15 2 L15 10 L8 9 L10 7 Q6 5 4 9" fill="#2b5cff"/><circle cx="3" cy="11" r="2" fill="#2244dd"/></svg>
<svg class="a" style="left:104px;top:174px;" width="11" height="17" viewBox="0 0 11 17"><path d="M5 1 L10 6 H7 V10 H3 V6 H0 Z" fill="#2b5cff"/><circle cx="5" cy="14" r="2" fill="#2244dd"/></svg>
<svg class="a" style="left:126px;top:175px;" width="2" height="18" viewBox="0 0 2 18"><path d="M1 0 V18" stroke="#333" stroke-width="1" stroke-dasharray="1.5 1.5"/></svg>
<svg class="a" style="left:136px;top:174px;" width="15" height="17" viewBox="0 0 15 17"><path d="M5 1 H9 V5 H12 L7 10 L2 5 H5 Z" fill="#2b5cff"/><circle cx="7" cy="13" r="2.2" fill="#2244dd"/><path d="M1 11 V16 M3 11 V16 M11 11 V16 M13 11 V16" stroke="#22d" stroke-width="1.2"/></svg>
<svg class="a" style="left:154px;top:183px;" width="7" height="4" viewBox="0 0 7 4"><path d="M0 0 H7 L3.5 4 Z" fill="#000"/></svg>
<svg class="a" style="left:165px;top:174px;" width="17" height="17" viewBox="0 0 17 17"><path d="M2 9 Q4 1 11 3 L13 4 L15 2 L15 10 L8 9 L10 7 Q6 5 4 9" fill="#2b5cff"/><circle cx="3" cy="10" r="2" fill="#2244dd"/><path d="M1 13 V16 M3 13 V16 M5 13 V16 M7 13 V16 M9 13 V16 M11 13 V16 M13 13 V16 M15 13 V16" stroke="#22d" stroke-width="1"/></svg>
<svg class="a" style="left:185px;top:183px;" width="7" height="4" viewBox="0 0 7 4"><path d="M0 0 H7 L3.5 4 Z" fill="#000"/></svg>
<svg class="a" style="left:198px;top:174px;" width="15" height="17" viewBox="0 0 15 17"><path d="M7 1 L12 6 H9 V9 H5 V6 H2 Z" fill="#2b5cff"/><circle cx="7" cy="13" r="2.2" fill="#2244dd"/><path d="M1 11 V16 M3 11 V16 M11 11 V16 M13 11 V16" stroke="#22d" stroke-width="1.2"/></svg>
<div class="t" style="top:177.50px;font-family:'Liberation Sans',sans-serif;font-size:21px;line-height:21px;color:#000;left:734px;">Layout</div>
<div class="a" style="left:800px;top:173px;width:241px;height:30px;background:#f0f0f0;box-sizing:border-box;border-top:1px solid #c8c8c8;border-left:1px solid #c8c8c8;border-bottom:1px solid #fff;"></div>
<div class="t" style="top:178.47px;font-family:'Liberation Mono',monospace;font-size:23.33px;line-height:23.33px;color:#222;left:804px;">Simulate</div>
<svg class="a" style="left:1044px;top:173px;" width="29" height="29" viewBox="0 0 29 29"><rect x="0.5" y="0.5" width="28" height="28" fill="#f0f0f0" stroke="#fff"/><path d="M28.5 0 V28.5 H0" stroke="#888" fill="none"/><path d="M8 12 H21 L14.5 19 Z" fill="#000"/></svg>
<div class="t" style="top:177.50px;font-family:'Liberation Sans',sans-serif;font-size:21px;line-height:21px;color:#6d6d6d;left:1101.25px;">ColumnLayout</div>
<div class="a" style="left:1241px;top:173px;width:421px;height:30px;background:#f0f0f0;box-sizing:border-box;border-top:1px solid #c8c8c8;border-left:1px solid #c8c8c8;border-bottom:1px solid #fff;"></div>
<div class="t" style="top:178.47px;font-family:'Liberation Mono',monospace;font-size:23.33px;line-height:23.33px;color:#777;left:1244px;">Default</div>
<svg class="a" style="left:1665px;top:173px;" width="29" height="29" viewBox="0 0 29 29"><rect x="0.5" y="0.5" width="28" height="28" fill="#f0f0f0" stroke="#fff"/><path d="M28.5 0 V28.5 H0" stroke="#888" fill="none"/><path d="M9 12 H20 L14.5 17.5 Z" fill="#444"/><path d="M10 12.5 H19 M11 14 H18 M12.5 15.5 H16.5" stroke="#f0f0f0" stroke-width=".5"/></svg>
<svg class="a" style="left:1720px;top:174px;" width="17" height="17" viewBox="0 0 17 17"><path d="M0.5 6 Q3 2.5 6 3.5 Q9 4.5 12 2 V8.5 Q9 11 6 10 Q3 9 0.5 11.5 Z" fill="#4aa8f0" stroke="#2a80d0" stroke-width=".7"/><path d="M2 6.5 Q4 5 6 5.5" stroke="#c8ecff" stroke-width="1.2" fill="none"/><path d="M12.5 1 V13" stroke="#b07428" stroke-width="1.6"/><circle cx="12" cy="13" r="3.5" fill="#3aa83a"/><path d="M10 13 H14 M12 11 V15" stroke="#fff" stroke-width="1.3"/></svg>
<svg class="a" style="left:1740px;top:183px;" width="7" height="4" viewBox="0 0 7 4"><path d="M0 0 H7 L3.5 4 Z" fill="#000"/></svg>
<svg class="a" style="left:1751px;top:174px;" width="17" height="17" viewBox="0 0 17 17"><path d="M0.5 6 Q3 2.5 6 3.5 Q9 4.5 12 2 V8.5 Q9 11 6 10 Q3 9 0.5 11.5 Z" fill="#4aa8f0" stroke="#2a80d0" stroke-width=".7"/><path d="M2 6.5 Q4 5 6 5.5" stroke="#c8ecff" stroke-width="1.2" fill="none"/><path d="M12.5 1 V13" stroke="#b07428" stroke-width="1.6"/><circle cx="12" cy="13" r="3.5" fill="#e8601a"/><path d="M10 13 H14" stroke="#fff" stroke-width="1.3"/></svg>
<svg class="a" style="left:1771px;top:183px;" width="7" height="4" viewBox="0 0 7 4"><path d="M0 0 H7 L3.5 4 Z" fill="#000"/></svg>
<svg class="a" style="left:1783px;top:174px;" width="17" height="17" viewBox="0 0 17 17"><path d="M0.5 6 Q3 2.5 6 3.5 Q9 4.5 12 2 V8.5 Q9 11 6 10 Q3 9 0.5 11.5 Z" fill="#4aa8f0" stroke="#2a80d0" stroke-width=".7"/><path d="M2 6.5 Q4 5 6 5.5" stroke="#c8ecff" stroke-width="1.2" fill="none"/><path d="M12.5 1 V13" stroke="#b07428" stroke-width="1.6"/><path d="M5 15.5 L14 5" stroke="#e0b040" stroke-width="3"/><path d="M5 15.5 L6 14" stroke="#a06020" stroke-width="2"/></svg>
<svg class="a" style="left:1805px;top:174px;" width="17" height="17" viewBox="0 0 17 17"><path d="M0.5 6 Q3 2.5 6 3.5 Q9 4.5 12 2 V8.5 Q9 11 6 10 Q3 9 0.5 11.5 Z" fill="#4aa8f0" stroke="#2a80d0" stroke-width=".7"/><path d="M2 6.5 Q4 5 6 5.5" stroke="#c8ecff" stroke-width="1.2" fill="none"/><path d="M12.5 1 V13" stroke="#b07428" stroke-width="1.6"/><rect x="6.5" y="7.5" width="9" height="9" fill="#fff" stroke="#3a6ad0"/><rect x="8" y="12" width="6" height="3" fill="#9d6"/><rect x="8" y="8.5" width="5" height="2.5" fill="#fff" stroke="#3a6ad0" stroke-width=".6"/></svg>
<svg class="a" style="left:1826px;top:183px;" width="7" height="4" viewBox="0 0 7 4"><path d="M0 0 H7 L3.5 4 Z" fill="#000"/></svg>
<svg class="a" style="left:1836px;top:174px;" width="17" height="17" viewBox="0 0 17 17"><path d="M0.5 6 Q3 2.5 6 3.5 Q9 4.5 12 2 V8.5 Q9 11 6 10 Q3 9 0.5 11.5 Z" fill="#4aa8f0" stroke="#2a80d0" stroke-width=".7"/><path d="M2 6.5 Q4 5 6 5.5" stroke="#c8ecff" stroke-width="1.2" fill="none"/><path d="M12.5 1 V13" stroke="#b07428" stroke-width="1.6"/><path d="M6 9.5 H10.5 V7 L15.5 11.5 L10.5 16 V13.5 H6 Z" fill="#5cb84a" stroke="#2a8a2a" stroke-width=".8"/></svg>
<div class="a" style="left:42px;top:211px;width:2880px;height:1426px;background:#c8c8c8;"></div>
<div class="a" style="left:43px;top:211px;width:603px;height:1383px;background:#a0a0a0;"></div>
<div class="a" style="left:44px;top:212px;width:601px;height:30px;background:#f0f0f0;"></div>
<svg class="a" style="left:45px;top:218px;" width="17" height="17" viewBox="0 0 17 17"><path d="M0 1.5 H3 M0 3.5 H3 M0 5.5 H2.5 M0 7.5 H2 M0 9.5 H2" stroke="#7a7ac8" stroke-width="1"/><path d="M6.5 1 H13 L15.5 3.5 V5.5 L14.5 12.5 H5.5 L3.5 11.5 Z" fill="#fff" stroke="#000" stroke-width="1.2"/><path d="M7.5 3.5 H12 M7 5.5 H11.5 M7 7.5 H11.5 M6.5 9.5 H11" stroke="#2a2a90" stroke-width="1" stroke-dasharray="1.2 .6"/><path d="M0.5 13 L3.5 10 L6.5 13 L3.5 16 Z M10.5 13.5 L13 11 L15.5 13.5 L13 16 Z" fill="#e0102a" stroke="#000" stroke-width="1"/><rect x="3" y="12.5" width="1" height="1" fill="#fff"/></svg>
<div class="t" style="top:218.16px;font-family:'Liberation Sans',sans-serif;font-size:21.4px;line-height:21.4px;color:#000;left:65px;">sim&nbsp;-&nbsp;Default</div>
<div class="a" style="left:190px;top:223px;width:403px;height:2px;background:#fff;"></div>
<div class="a" style="left:190px;top:225px;width:403px;height:1px;background:#6e6e6e;"></div>
<div class="a" style="left:190px;top:228px;width:403px;height:2px;background:#fff;"></div>
<div class="a" style="left:190px;top:230px;width:403px;height:1px;background:#6e6e6e;"></div>
<div class="a" style="left:592px;top:223px;width:1px;height:8px;background:#6e6e6e;"></div>
<div class="a" style="left:382px;top:221px;width:20px;height:12px;background:#f0f0f0;"></div>
<svg class="a" style="left:384px;top:224px;" width="18" height="8" viewBox="0 0 18 8"><rect x="0" y="0" width="1.2" height="1.2" fill="#000"/><rect x="1" y="3" width="1.2" height="1.2" fill="#000"/><rect x="0" y="6" width="1.2" height="1.2" fill="#000"/><rect x="3" y="0" width="1.2" height="1.2" fill="#000"/><rect x="4" y="3" width="1.2" height="1.2" fill="#000"/><rect x="3" y="6" width="1.2" height="1.2" fill="#000"/><rect x="6" y="0" width="1.2" height="1.2" fill="#000"/><rect x="7" y="3" width="1.2" height="1.2" fill="#000"/><rect x="6" y="6" width="1.2" height="1.2" fill="#000"/><rect x="9" y="0" width="1.2" height="1.2" fill="#000"/><rect x="10" y="3" width="1.2" height="1.2" fill="#000"/><rect x="9" y="6" width="1.2" height="1.2" fill="#000"/><rect x="12" y="0" width="1.2" height="1.2" fill="#000"/><rect x="13" y="3" width="1.2" height="1.2" fill="#000"/><rect x="12" y="6" width="1.2" height="1.2" fill="#000"/><rect x="15" y="0" width="1.2" height="1.2" fill="#000"/><rect x="16" y="3" width="1.2" height="1.2" fill="#000"/><rect x="15" y="6" width="1.2" height="1.2" fill="#000"/></svg>
<svg class="a" style="left:597px;top:219px;" width="14" height="14" viewBox="0 0 14 14"><rect x="0" y="0" width="14" height="14" fill="#f0f0f0"/><path d="M13.5 0 V13.5 H0" stroke="#888" fill="none"/><path d="M7 3 V11 M3 7 H11" stroke="#000" stroke-width="2"/></svg>
<svg class="a" style="left:613px;top:219px;" width="14" height="14" viewBox="0 0 14 14"><rect x="0" y="0" width="14" height="14" fill="#f0f0f0"/><path d="M13.5 0 V13.5 H0" stroke="#888" fill="none"/><rect x="2.5" y="6.5" width="5" height="5" fill="none" stroke="#000" stroke-width="1.3"/><path d="M6 8 L11 3 M8 3 H11 V6" stroke="#000" stroke-width="1.5" fill="none"/></svg>
<svg class="a" style="left:629px;top:219px;" width="14" height="14" viewBox="0 0 14 14"><rect x="0" y="0" width="14" height="14" fill="#f0f0f0"/><path d="M13.5 0 V13.5 H0" stroke="#888" fill="none"/><path d="M3 3 L11 11 M11 3 L3 11" stroke="#000" stroke-width="1.6"/></svg>
<div class="a" style="left:44px;top:242px;width:601px;height:1px;background:#a0a0a0;"></div>
<div class="a" style="left:44px;top:243px;width:601px;height:31px;background:#f0f0f0;"></div>
<div class="a" style="left:44px;top:274px;width:601px;height:1px;background:#a0a0a0;"></div>
<div class="a" style="left:56px;top:243px;width:1px;height:31px;background:#a0a0a0;"></div>
<div class="a" style="left:57px;top:243px;width:1px;height:31px;background:#fff;"></div>
<div class="a" style="left:333px;top:243px;width:1px;height:31px;background:#a0a0a0;"></div>
<div class="a" style="left:334px;top:243px;width:1px;height:31px;background:#fff;"></div>
<div class="a" style="left:457.5px;top:243px;width:1.0px;height:31px;background:#a0a0a0;"></div>
<div class="a" style="left:458.5px;top:243px;width:1.0px;height:31px;background:#fff;"></div>
<div class="a" style="left:627.5px;top:243px;width:1.0px;height:31px;background:#a0a0a0;"></div>
<div class="a" style="left:628.5px;top:243px;width:1.0px;height:31px;background:#fff;"></div>
<svg class="a" style="left:45px;top:258px;" width="9" height="8" viewBox="0 0 9 8"><path d="M0.5 0.5 H8.5 L4.5 7 Z" fill="#777"/></svg>
<div class="t" style="top:249.85px;font-family:'Liberation Sans',sans-serif;font-size:20.6px;line-height:20.6px;color:#000;left:59.5px;">Instance</div>
<div class="t" style="top:249.50px;font-family:'Liberation Sans',sans-serif;font-size:21px;line-height:21px;color:#000;left:336.75px;">Design&nbsp;unit</div>
<div class="t" style="top:249.50px;font-family:'Liberation Sans',sans-serif;font-size:21px;line-height:21px;color:#000;left:460.75px;">Design&nbsp;unit&nbsp;type</div>
<div class="t" style="top:249.50px;font-family:'Liberation Sans',sans-serif;font-size:21px;line-height:21px;color:#000;left:630px;width:14px;overflow:hidden;">To</div>
<div class="a" style="left:45px;top:275px;width:600px;height:1300px;background:#fff;"></div>
<div class="a" style="left:45px;top:340px;width:600px;height:30px;background:#bfcddb;"></div>
<div class="a" style="left:73px;top:299px;width:1px;height:56px;background:#808080;"></div>
<div class="a" style="left:61px;top:293px;width:6px;height:1px;background:#808080;"></div>
<div class="a" style="left:79px;top:324px;width:6px;height:1px;background:#808080;"></div>
<div class="a" style="left:73px;top:355px;width:12px;height:1px;background:#808080;"></div>
<svg class="a" style="left:50px;top:288px;" width="11" height="11" viewBox="0 0 11 11"><defs><linearGradient id="pmg" x1="0" y1="0" x2="1" y2="1"><stop offset="0" stop-color="#fff"/><stop offset="1" stop-color="#c8d0e8"/></linearGradient></defs><rect x="0.5" y="0.5" width="10" height="10" rx="1.5" fill="url(#pmg)" stroke="#8a94b0"/><path d="M2.5 5.5 H8.5" stroke="#000" stroke-width="1.2"/></svg>
<svg class="a" style="left:68px;top:319px;" width="11" height="11" viewBox="0 0 11 11"><defs><linearGradient id="pmg" x1="0" y1="0" x2="1" y2="1"><stop offset="0" stop-color="#fff"/><stop offset="1" stop-color="#c8d0e8"/></linearGradient></defs><rect x="0.5" y="0.5" width="10" height="10" rx="1.5" fill="url(#pmg)" stroke="#8a94b0"/><path d="M2.5 5.5 H8.5" stroke="#000" stroke-width="1.2"/><path d="M5.5 2.5 V8.5" stroke="#000" stroke-width="1.2"/></svg>
<svg class="a" style="left:67px;top:287px;" width="12" height="12" viewBox="0 0 12 12"><rect x="0" y="0" width="12" height="12" fill="#006a94"/><path d="M0 0 H12 L0 12 Z" fill="#a8e6f6"/><rect x="3" y="3" width="6" height="6" fill="#00c4f2"/><path d="M12 0 L9.5 2.5 M0 12 L2.5 9.5" stroke="#000" stroke-width="1.2"/></svg>
<svg class="a" style="left:85px;top:318px;" width="12" height="12" viewBox="0 0 12 12"><rect x="0" y="0" width="12" height="12" fill="#006a94"/><path d="M0 0 H12 L0 12 Z" fill="#a8e6f6"/><rect x="3" y="3" width="6" height="6" fill="#00c4f2"/><path d="M12 0 L9.5 2.5 M0 12 L2.5 9.5" stroke="#000" stroke-width="1.2"/></svg>
<svg class="a" style="left:84px;top:348px;" width="14" height="14" viewBox="0 0 14 14"><circle cx="7" cy="7" r="6.5" fill="#1990b8"/><circle cx="6" cy="6" r="4.5" fill="#30c0e8"/><circle cx="4.5" cy="4" r="1.5" fill="#fff"/></svg>
<svg class="a" style="left:65px;top:378px;" width="17" height="17" viewBox="0 0 17 17"><path d="M1 0 V16 H16" stroke="#00c" stroke-width="1.5" fill="none"/><path d="M3 6 Q7 1 12 5" stroke="#e22" stroke-width="2" fill="none"/><path d="M4 10 L8 5 L14 2" stroke="#2ac" stroke-width="1.5" fill="none"/><path d="M3 14 Q8 9 14 13" stroke="#3b3" stroke-width="2" fill="none"/></svg>
<div class="t" style="top:286.93px;font-family:'Liberation Sans',sans-serif;font-size:20.5px;line-height:20.5px;color:#000;left:92.6px;">tb_pic_ram</div>
<div class="t" style="top:287.62px;font-family:'Liberation Sans',sans-serif;font-size:19.7px;line-height:19.7px;color:#000;left:336px;">tb_pic_ram...</div>
<div class="t" style="top:286.85px;font-family:'Liberation Sans',sans-serif;font-size:20.6px;line-height:20.6px;color:#000;left:460.75px;">Module</div>
<div class="t" style="top:286.85px;font-family:'Liberation Sans',sans-serif;font-size:20.6px;line-height:20.6px;color:#000;left:631px;width:13px;overflow:hidden;">D</div>
<div class="t" style="top:317.93px;font-family:'Liberation Sans',sans-serif;font-size:20.5px;line-height:20.5px;color:#000;left:110.7px;">dut</div>
<div class="t" style="top:318.62px;font-family:'Liberation Sans',sans-serif;font-size:19.7px;line-height:19.7px;color:#000;left:336px;">pic_ram(fast)</div>
<div class="t" style="top:317.85px;font-family:'Liberation Sans',sans-serif;font-size:20.6px;line-height:20.6px;color:#000;left:460.75px;">Module</div>
<div class="t" style="top:317.85px;font-family:'Liberation Sans',sans-serif;font-size:20.6px;line-height:20.6px;color:#000;left:631px;width:13px;overflow:hidden;">D</div>
<div class="t" style="top:348.93px;font-family:'Liberation Sans',sans-serif;font-size:20.5px;line-height:20.5px;color:#000;left:109px;">#INITIAL#18</div>
<div class="t" style="top:349.62px;font-family:'Liberation Sans',sans-serif;font-size:19.7px;line-height:19.7px;color:#000;left:336px;">tb_pic_ram...</div>
<div class="t" style="top:348.85px;font-family:'Liberation Sans',sans-serif;font-size:20.6px;line-height:20.6px;color:#000;left:460.75px;">Process</div>
<div class="t" style="top:348.85px;font-family:'Liberation Sans',sans-serif;font-size:20.6px;line-height:20.6px;color:#000;left:631px;width:13px;overflow:hidden;">-</div>
<div class="t" style="top:379.93px;font-family:'Liberation Sans',sans-serif;font-size:20.5px;line-height:20.5px;color:#000;left:92px;">#vsim_capacity#</div>
<div class="t" style="top:379.85px;font-family:'Liberation Sans',sans-serif;font-size:20.6px;line-height:20.6px;color:#000;left:460.75px;">Capacity</div>
<div class="t" style="top:379.85px;font-family:'Liberation Sans',sans-serif;font-size:20.6px;line-height:20.6px;color:#000;left:631px;width:13px;overflow:hidden;">St</div>
<div class="a" style="left:44px;top:1575px;width:601px;height:20px;background:#f0f0f0;"></div>
<svg class="a" style="left:44px;top:1578px;" width="33" height="15" viewBox="0 0 33 15"><rect x="0" y="0" width="33" height="15" fill="#f0f0f0"/><path d="M0.5 14 V0.5 H32" stroke="#fff" fill="none"/><path d="M32 0 V14 H0" stroke="#8a8a8a" fill="none" stroke-width="2"/><path d="M19 4.5 V10.5 L15 7.5 Z" fill="#000"/></svg>
<svg class="a" style="left:77px;top:1578px;" width="321" height="15" viewBox="0 0 321 15"><rect x="0" y="0" width="321" height="15" fill="#f0f0f0"/><path d="M0.5 14 V0.5 H320" stroke="#fff" fill="none"/><path d="M320 0 V14 H0" stroke="#8a8a8a" fill="none" stroke-width="2"/></svg>
<div class="a" style="left:398px;top:1578px;width:213px;height:15px;background:#f6f6f6;"></div>
<svg class="a" style="left:611px;top:1578px;" width="34" height="15" viewBox="0 0 34 15"><rect x="0" y="0" width="34" height="15" fill="#f0f0f0"/><path d="M0.5 14 V0.5 H33" stroke="#fff" fill="none"/><path d="M33 0 V14 H0" stroke="#8a8a8a" fill="none" stroke-width="2"/><path d="M14 4.5 V10.5 L18 7.5 Z" fill="#000"/></svg>
<div class="a" style="left:43px;top:1594px;width:583px;height:36px;background:#f0f0f0;"></div>
<div class="a" style="left:43px;top:1596px;width:583px;height:1px;background:#000;"></div>
<div class="a" style="left:43px;top:1596px;width:107px;height:33px;background:#c8c8c8;box-sizing:border-box;border-left:1px solid #000;border-right:1px solid #000;border-bottom:1px solid #000;border-radius:0 0 4px 4px;border-top:1px solid #000;"></div>
<svg class="a" style="left:47px;top:1603px;" width="17" height="17" viewBox="0 0 17 17"><rect x="1" y="3" width="14" height="12" fill="#fff" stroke="#000"/><path d="M2 4 H14" stroke="#22a" stroke-dasharray="1 1"/><path d="M5 4 V9 M3 7 L5 9 L7 7 M11 4 V9 M9 7 L11 9 L13 7" stroke="#118" stroke-width="1.3" fill="none"/><path d="M2 12 H14" stroke="#000" stroke-dasharray="1 1"/></svg>
<div class="t" style="top:1603.00px;font-family:'Liberation Sans',sans-serif;font-size:21px;line-height:21px;color:#000;left:68px;">Project</div>
<svg class="a" style="left:137.5px;top:1607px;" width="9" height="9" viewBox="0 0 9 9"><path d="M1 1 L8 8 M8 1 L1 8" stroke="#b4b4b4" stroke-width="2"/></svg>
<div class="a" style="left:150px;top:1596px;width:77px;height:33px;background:#f0f0f0;box-sizing:border-box;border-left:1px solid #000;border-right:1px solid #000;border-bottom:1px solid #000;border-radius:0 0 4px 4px;"></div>
<svg class="a" style="left:154px;top:1603px;" width="17" height="17" viewBox="0 0 17 17"><path d="M0 1.5 H3 M0 3.5 H3 M0 5.5 H2.5 M0 7.5 H2 M0 9.5 H2" stroke="#7a7ac8" stroke-width="1"/><path d="M6.5 1 H13 L15.5 3.5 V5.5 L14.5 12.5 H5.5 L3.5 11.5 Z" fill="#fff" stroke="#000" stroke-width="1.2"/><path d="M7.5 3.5 H12 M7 5.5 H11.5 M7 7.5 H11.5 M6.5 9.5 H11" stroke="#2a2a90" stroke-width="1" stroke-dasharray="1.2 .6"/><path d="M0.5 13 L3.5 10 L6.5 13 L3.5 16 Z M10.5 13.5 L13 11 L15.5 13.5 L13 16 Z" fill="#e0102a" stroke="#000" stroke-width="1"/><rect x="3" y="12.5" width="1" height="1" fill="#fff"/></svg>
<div class="t" style="top:1603.00px;font-family:'Liberation Sans',sans-serif;font-size:21px;line-height:21px;color:#000;left:175.5px;">sim</div>
<svg class="a" style="left:214px;top:1607px;" width="9" height="9" viewBox="0 0 9 9"><path d="M1 1 L8 8 M8 1 L1 8" stroke="#b4b4b4" stroke-width="2"/></svg>
<svg class="a" style="left:626px;top:1596px;" width="21" height="16" viewBox="0 0 21 16"><rect x="0" y="0" width="10" height="15" fill="#f0f0f0"/><rect x="11" y="0" width="10" height="15" fill="#f0f0f0"/><path d="M9.5 0 V14.5 H0 M20.5 0 V14.5 H11" stroke="#888" fill="none"/><path d="M6 4 L3 8 L6 12 M8 4 L5 8 L8 12 M14 4 L17 8 L14 12 M12 4 L15 8 L12 12" stroke="#000" fill="none" stroke-width=".9"/></svg>
<div class="a" style="left:653px;top:211px;width:536px;height:1418px;background:#fff;"></div>
<div class="a" style="left:653px;top:211px;width:536px;height:1px;background:#a0a0a0;"></div>
<div class="a" style="left:654px;top:212px;width:534px;height:30px;background:#f0f0f0;"></div>
<svg class="a" style="left:655px;top:218px;" width="17" height="17" viewBox="0 0 17 17"><path d="M0.5 6.5 L6 1 L9.5 4.5 L5 7 Z" fill="#d82cf0" stroke="#6a0a80" stroke-width=".9"/><rect x="10" y="5.5" width="6" height="7.5" fill="#18b83a" stroke="#0a6a1a" stroke-width=".8"/><circle cx="9.2" cy="6.5" r="3.4" fill="#00eaff" stroke="#4a8aa0" stroke-width=".6"/><path d="M0 11 L5 6 L10 11 L5 16 Z" fill="#0050e6"/></svg>
<div class="t" style="top:218.16px;font-family:'Liberation Sans',sans-serif;font-size:21.4px;line-height:21.4px;color:#000;left:676.5px;">Objects</div>
<div class="a" style="left:753px;top:223px;width:383px;height:2px;background:#fff;"></div>
<div class="a" style="left:753px;top:225px;width:383px;height:1px;background:#6e6e6e;"></div>
<div class="a" style="left:753px;top:228px;width:383px;height:2px;background:#fff;"></div>
<div class="a" style="left:753px;top:230px;width:383px;height:1px;background:#6e6e6e;"></div>
<div class="a" style="left:1135px;top:223px;width:1px;height:8px;background:#6e6e6e;"></div>
<div class="a" style="left:933px;top:221px;width:20px;height:12px;background:#f0f0f0;"></div>
<svg class="a" style="left:935px;top:224px;" width="18" height="8" viewBox="0 0 18 8"><rect x="0" y="0" width="1.2" height="1.2" fill="#000"/><rect x="1" y="3" width="1.2" height="1.2" fill="#000"/><rect x="0" y="6" width="1.2" height="1.2" fill="#000"/><rect x="3" y="0" width="1.2" height="1.2" fill="#000"/><rect x="4" y="3" width="1.2" height="1.2" fill="#000"/><rect x="3" y="6" width="1.2" height="1.2" fill="#000"/><rect x="6" y="0" width="1.2" height="1.2" fill="#000"/><rect x="7" y="3" width="1.2" height="1.2" fill="#000"/><rect x="6" y="6" width="1.2" height="1.2" fill="#000"/><rect x="9" y="0" width="1.2" height="1.2" fill="#000"/><rect x="10" y="3" width="1.2" height="1.2" fill="#000"/><rect x="9" y="6" width="1.2" height="1.2" fill="#000"/><rect x="12" y="0" width="1.2" height="1.2" fill="#000"/><rect x="13" y="3" width="1.2" height="1.2" fill="#000"/><rect x="12" y="6" width="1.2" height="1.2" fill="#000"/><rect x="15" y="0" width="1.2" height="1.2" fill="#000"/><rect x="16" y="3" width="1.2" height="1.2" fill="#000"/><rect x="15" y="6" width="1.2" height="1.2" fill="#000"/></svg>
<svg class="a" style="left:1140px;top:219px;" width="14" height="14" viewBox="0 0 14 14"><rect x="0" y="0" width="14" height="14" fill="#f0f0f0"/><path d="M13.5 0 V13.5 H0" stroke="#888" fill="none"/><path d="M7 3 V11 M3 7 H11" stroke="#000" stroke-width="2"/></svg>
<svg class="a" style="left:1156px;top:219px;" width="14" height="14" viewBox="0 0 14 14"><rect x="0" y="0" width="14" height="14" fill="#f0f0f0"/><path d="M13.5 0 V13.5 H0" stroke="#888" fill="none"/><rect x="2.5" y="6.5" width="5" height="5" fill="none" stroke="#000" stroke-width="1.3"/><path d="M6 8 L11 3 M8 3 H11 V6" stroke="#000" stroke-width="1.5" fill="none"/></svg>
<svg class="a" style="left:1172px;top:219px;" width="14" height="14" viewBox="0 0 14 14"><rect x="0" y="0" width="14" height="14" fill="#f0f0f0"/><path d="M13.5 0 V13.5 H0" stroke="#888" fill="none"/><path d="M3 3 L11 11 M11 3 L3 11" stroke="#000" stroke-width="1.6"/></svg>
<div class="a" style="left:655px;top:242px;width:533px;height:1px;background:#a0a0a0;"></div>
<div class="a" style="left:655px;top:243px;width:533px;height:31px;background:#f0f0f0;"></div>
<div class="a" style="left:655px;top:274px;width:533px;height:1px;background:#a0a0a0;"></div>
<div class="a" style="left:667px;top:243px;width:1px;height:31px;background:#a0a0a0;"></div>
<div class="a" style="left:668px;top:243px;width:1px;height:31px;background:#fff;"></div>
<div class="a" style="left:944px;top:243px;width:1px;height:31px;background:#a0a0a0;"></div>
<div class="a" style="left:945px;top:243px;width:1px;height:31px;background:#fff;"></div>
<div class="a" style="left:1014px;top:243px;width:1px;height:31px;background:#a0a0a0;"></div>
<div class="a" style="left:1015px;top:243px;width:1px;height:31px;background:#fff;"></div>
<div class="a" style="left:1073px;top:243px;width:1px;height:31px;background:#a0a0a0;"></div>
<div class="a" style="left:1074px;top:243px;width:1px;height:31px;background:#fff;"></div>
<svg class="a" style="left:657px;top:258px;" width="9" height="8" viewBox="0 0 9 8"><path d="M0.5 0.5 H8.5 L4.5 7 Z" fill="#777"/></svg>
<div class="t" style="top:249.50px;font-family:'Liberation Sans',sans-serif;font-size:21px;line-height:21px;color:#000;left:671px;">Name</div>
<svg class="a" style="left:933px;top:254px;" width="10" height="9" viewBox="0 0 10 9"><path d="M5 0.5 L9.5 8.5 H0.5 Z" fill="none" stroke="#999"/></svg>
<div class="t" style="top:249.50px;font-family:'Liberation Sans',sans-serif;font-size:21px;line-height:21px;color:#000;left:947.5px;">Value</div>
<div class="t" style="top:249.50px;font-family:'Liberation Sans',sans-serif;font-size:21px;line-height:21px;color:#000;left:1017.5px;">Kind</div>
<div class="a" style="left:1078px;top:245px;width:98px;height:28px;background:#e4ece4;box-sizing:border-box;border:1px solid #c8d0c8;"></div>
<div class="a" style="left:1095px;top:245px;width:1px;height:28px;background:#c8d0c8;"></div>
<div class="a" style="left:1158px;top:245px;width:1px;height:28px;background:#c8d0c8;"></div>
<svg class="a" style="left:1081px;top:253px;" width="13" height="13" viewBox="0 0 13 13"><path d="M1 1 H3 V11 H7" stroke="#000" fill="none" stroke-width="1.2"/><path d="M12 6 H5 M7.5 3.5 L5 6 L7.5 8.5" stroke="#777" stroke-width="2" fill="none"/></svg>
<div class="a" style="left:1101px;top:258px;width:8px;height:8px;background:#ff8000;box-sizing:border-box;border:1px solid #000;"></div>
<div class="t" style="top:248.08px;font-family:'Liberation Serif',serif;font-size:22px;line-height:22px;color:#7f7a6a;left:1113px;">Now</div>
<svg class="a" style="left:1161px;top:253px;" width="13" height="13" viewBox="0 0 13 13"><path d="M12 1 H10 V11 H6" stroke="#000" fill="none" stroke-width="1.2"/><path d="M1 6 H8 M5.5 3.5 L8 6 L5.5 8.5" stroke="#777" stroke-width="2" fill="none"/></svg>
<svg class="a" style="left:1179px;top:254px;" width="7" height="11" viewBox="0 0 7 11"><path d="M0 0 L6 5.5 L0 11 Z" fill="#000"/></svg>
<div class="a" style="left:656px;top:275px;width:531px;height:1352px;background:#505a8c;"></div>
<svg class="a" style="left:661px;top:288px;" width="11" height="11" viewBox="0 0 11 11"><defs><linearGradient id="pmg" x1="0" y1="0" x2="1" y2="1"><stop offset="0" stop-color="#fff"/><stop offset="1" stop-color="#c8d0e8"/></linearGradient></defs><rect x="0.5" y="0.5" width="10" height="10" rx="1.5" fill="url(#pmg)" stroke="#8a94b0"/><path d="M2.5 5.5 H8.5" stroke="#000" stroke-width="1.2"/><path d="M5.5 2.5 V8.5" stroke="#000" stroke-width="1.2"/></svg>
<div class="a" style="left:672px;top:293px;width:5px;height:1px;background:#a0a0a0;"></div>
<svg class="a" style="left:676px;top:285px;" width="15" height="15" viewBox="0 0 15 15"><path d="M7.5 0 L15 7.5 L7.5 15 L0 7.5 Z" fill="#1a8ac8"/><path d="M7.5 0 L15 7.5 L7.5 9 L0 7.5 Z" fill="#7ad8f8"/><path d="M7.5 3 L12 7.5 L7.5 12 L3 7.5 Z" fill="#10b8f0"/></svg>
<div class="t" style="top:286.55px;font-family:'Liberation Sans',sans-serif;font-size:20.6px;line-height:20.6px;color:#fff;left:702.6px;">address</div>
<div class="t" style="top:286.55px;font-family:'Liberation Sans',sans-serif;font-size:20.6px;line-height:20.6px;color:#fff;left:947.6px;">9'h155</div>
<div class="t" style="top:286.55px;font-family:'Liberation Sans',sans-serif;font-size:20.6px;line-height:20.6px;color:#fff;left:1018px;">Pac...</div>
<div class="t" style="top:286.55px;font-family:'Liberation Sans',sans-serif;font-size:20.6px;line-height:20.6px;color:#fff;left:1077px;">Inter...</div>
<svg class="a" style="left:661px;top:319px;" width="11" height="11" viewBox="0 0 11 11"><defs><linearGradient id="pmg" x1="0" y1="0" x2="1" y2="1"><stop offset="0" stop-color="#fff"/><stop offset="1" stop-color="#c8d0e8"/></linearGradient></defs><rect x="0.5" y="0.5" width="10" height="10" rx="1.5" fill="url(#pmg)" stroke="#8a94b0"/><path d="M2.5 5.5 H8.5" stroke="#000" stroke-width="1.2"/><path d="M5.5 2.5 V8.5" stroke="#000" stroke-width="1.2"/></svg>
<div class="a" style="left:672px;top:324px;width:5px;height:1px;background:#a0a0a0;"></div>
<svg class="a" style="left:676px;top:316px;" width="15" height="15" viewBox="0 0 15 15"><path d="M7.5 0 L15 7.5 L7.5 15 L0 7.5 Z" fill="#1a8ac8"/><path d="M7.5 0 L15 7.5 L7.5 9 L0 7.5 Z" fill="#7ad8f8"/><path d="M7.5 3 L12 7.5 L7.5 12 L3 7.5 Z" fill="#10b8f0"/></svg>
<div class="t" style="top:317.50px;font-family:'Liberation Sans',sans-serif;font-size:20.6px;line-height:20.6px;color:#fff;left:702.6px;">calc</div>
<div class="t" style="top:317.50px;font-family:'Liberation Sans',sans-serif;font-size:20.6px;line-height:20.6px;color:#fff;left:947.6px;">3'h7</div>
<div class="t" style="top:317.50px;font-family:'Liberation Sans',sans-serif;font-size:20.6px;line-height:20.6px;color:#fff;left:1018px;">Pac...</div>
<div class="t" style="top:317.50px;font-family:'Liberation Sans',sans-serif;font-size:20.6px;line-height:20.6px;color:#fff;left:1077px;">Inter...</div>
<svg class="a" style="left:661px;top:350px;" width="11" height="11" viewBox="0 0 11 11"><defs><linearGradient id="pmg" x1="0" y1="0" x2="1" y2="1"><stop offset="0" stop-color="#fff"/><stop offset="1" stop-color="#c8d0e8"/></linearGradient></defs><rect x="0.5" y="0.5" width="10" height="10" rx="1.5" fill="url(#pmg)" stroke="#8a94b0"/><path d="M2.5 5.5 H8.5" stroke="#000" stroke-width="1.2"/><path d="M5.5 2.5 V8.5" stroke="#000" stroke-width="1.2"/></svg>
<div class="a" style="left:672px;top:355px;width:5px;height:1px;background:#a0a0a0;"></div>
<svg class="a" style="left:676px;top:347px;" width="15" height="15" viewBox="0 0 15 15"><path d="M7.5 0 L15 7.5 L7.5 15 L0 7.5 Z" fill="#1a8ac8"/><path d="M7.5 0 L15 7.5 L7.5 9 L0 7.5 Z" fill="#7ad8f8"/><path d="M7.5 3 L12 7.5 L7.5 12 L3 7.5 Z" fill="#10b8f0"/></svg>
<div class="t" style="top:348.45px;font-family:'Liberation Sans',sans-serif;font-size:20.6px;line-height:20.6px;color:#fff;left:702.6px;">num</div>
<div class="t" style="top:348.45px;font-family:'Liberation Sans',sans-serif;font-size:20.6px;line-height:20.6px;color:#fff;left:947.6px;">12'hc...</div>
<div class="t" style="top:348.45px;font-family:'Liberation Sans',sans-serif;font-size:20.6px;line-height:20.6px;color:#fff;left:1018px;">Pac...</div>
<div class="t" style="top:348.45px;font-family:'Liberation Sans',sans-serif;font-size:20.6px;line-height:20.6px;color:#fff;left:1077px;">Inter...</div>
<svg class="a" style="left:661px;top:381px;" width="11" height="11" viewBox="0 0 11 11"><defs><linearGradient id="pmg" x1="0" y1="0" x2="1" y2="1"><stop offset="0" stop-color="#fff"/><stop offset="1" stop-color="#c8d0e8"/></linearGradient></defs><rect x="0.5" y="0.5" width="10" height="10" rx="1.5" fill="url(#pmg)" stroke="#8a94b0"/><path d="M2.5 5.5 H8.5" stroke="#000" stroke-width="1.2"/><path d="M5.5 2.5 V8.5" stroke="#000" stroke-width="1.2"/></svg>
<div class="a" style="left:672px;top:386px;width:5px;height:1px;background:#a0a0a0;"></div>
<svg class="a" style="left:676px;top:378px;" width="15" height="15" viewBox="0 0 15 15"><path d="M7.5 0 L15 7.5 L7.5 15 L0 7.5 Z" fill="#1a8ac8"/><path d="M7.5 0 L15 7.5 L7.5 9 L0 7.5 Z" fill="#7ad8f8"/><path d="M7.5 3 L12 7.5 L7.5 12 L3 7.5 Z" fill="#10b8f0"/></svg>
<div class="t" style="top:379.40px;font-family:'Liberation Sans',sans-serif;font-size:20.6px;line-height:20.6px;color:#fff;left:702.6px;">q</div>
<div class="t" style="top:379.40px;font-family:'Liberation Sans',sans-serif;font-size:20.6px;line-height:20.6px;color:#fff;left:947.6px;">240'h...</div>
<div class="t" style="top:379.40px;font-family:'Liberation Sans',sans-serif;font-size:20.6px;line-height:20.6px;color:#fff;left:1018px;">Net</div>
<div class="t" style="top:379.40px;font-family:'Liberation Sans',sans-serif;font-size:20.6px;line-height:20.6px;color:#fff;left:1077px;">Inter...</div>
<div class="a" style="left:1196px;top:211px;width:1725px;height:1383px;background:#fff;"></div>
<div class="a" style="left:1196px;top:211px;width:1725px;height:1px;background:#a0a0a0;"></div>
<div class="a" style="left:1198px;top:212px;width:1722px;height:30px;background:#99b4d1;"></div>
<svg class="a" style="left:1199px;top:218px;" width="17" height="17" viewBox="0 0 17 17"><rect x="0" y="0" width="16" height="16" fill="#000"/><rect x="0" y="0" width="15" height="15" fill="#fff"/><rect x="1" y="1" width="14" height="14" fill="#c4c4c4"/><rect x="2" y="2" width="12" height="2" fill="#fff"/><rect x="2" y="6" width="12" height="8" fill="#000"/><path d="M2 7.5 H4.5 V9.5 H6.5 V7.5 H9.5 V9.5 H14 M2 11 H5.5 V13.5 H7.5 V12" stroke="#0a9a3a" stroke-width="1.1" fill="none"/><rect x="6" y="6" width="1" height="8" fill="#40e8f8"/><rect x="8" y="11.5" width="6" height="1.6" fill="#5010e0"/></svg>
<div class="t" style="top:218.16px;font-family:'Liberation Sans',sans-serif;font-size:21.4px;line-height:21.4px;color:#000;left:1219.4px;">Wave&nbsp;-&nbsp;Default</div>
<div class="a" style="left:1365px;top:223px;width:1503px;height:2px;background:#c8f0ff;"></div>
<div class="a" style="left:1365px;top:225px;width:1503px;height:1px;background:#000;"></div>
<div class="a" style="left:1365px;top:228px;width:1503px;height:2px;background:#c8f0ff;"></div>
<div class="a" style="left:1365px;top:230px;width:1503px;height:1px;background:#000;"></div>
<div class="a" style="left:2867px;top:223px;width:1px;height:8px;background:#000;"></div>
<div class="a" style="left:2108px;top:221px;width:20px;height:12px;background:#99b4d1;"></div>
<svg class="a" style="left:2110px;top:224px;" width="18" height="8" viewBox="0 0 18 8"><rect x="0" y="0" width="1.2" height="1.2" fill="#000"/><rect x="1" y="3" width="1.2" height="1.2" fill="#000"/><rect x="0" y="6" width="1.2" height="1.2" fill="#000"/><rect x="3" y="0" width="1.2" height="1.2" fill="#000"/><rect x="4" y="3" width="1.2" height="1.2" fill="#000"/><rect x="3" y="6" width="1.2" height="1.2" fill="#000"/><rect x="6" y="0" width="1.2" height="1.2" fill="#000"/><rect x="7" y="3" width="1.2" height="1.2" fill="#000"/><rect x="6" y="6" width="1.2" height="1.2" fill="#000"/><rect x="9" y="0" width="1.2" height="1.2" fill="#000"/><rect x="10" y="3" width="1.2" height="1.2" fill="#000"/><rect x="9" y="6" width="1.2" height="1.2" fill="#000"/><rect x="12" y="0" width="1.2" height="1.2" fill="#000"/><rect x="13" y="3" width="1.2" height="1.2" fill="#000"/><rect x="12" y="6" width="1.2" height="1.2" fill="#000"/><rect x="15" y="0" width="1.2" height="1.2" fill="#000"/><rect x="16" y="3" width="1.2" height="1.2" fill="#000"/><rect x="15" y="6" width="1.2" height="1.2" fill="#000"/></svg>
<svg class="a" style="left:2872px;top:219px;" width="14" height="14" viewBox="0 0 14 14"><rect x="0" y="0" width="14" height="14" fill="#f0f0f0"/><path d="M13.5 0 V13.5 H0" stroke="#888" fill="none"/><path d="M7 3 V11 M3 7 H11" stroke="#000" stroke-width="2"/></svg>
<svg class="a" style="left:2888px;top:219px;" width="14" height="14" viewBox="0 0 14 14"><rect x="0" y="0" width="14" height="14" fill="#f0f0f0"/><path d="M13.5 0 V13.5 H0" stroke="#888" fill="none"/><rect x="2.5" y="6.5" width="5" height="5" fill="none" stroke="#000" stroke-width="1.3"/><path d="M6 8 L11 3 M8 3 H11 V6" stroke="#000" stroke-width="1.5" fill="none"/></svg>
<svg class="a" style="left:2904px;top:219px;" width="14" height="14" viewBox="0 0 14 14"><rect x="0" y="0" width="14" height="14" fill="#f0f0f0"/><path d="M13.5 0 V13.5 H0" stroke="#888" fill="none"/><path d="M3 3 L11 11 M11 3 L3 11" stroke="#000" stroke-width="1.6"/></svg>
<div class="a" style="left:1199px;top:244px;width:159px;height:18px;background:#808080;"></div>
<div class="a" style="left:1361px;top:244px;width:100px;height:18px;background:#808080;"></div>
<div class="a" style="left:1464px;top:244px;width:1434px;height:18px;background:#000;"></div>
<div class="a" style="left:2901px;top:244px;width:17px;height:18px;background:#808080;"></div>
<svg class="a" style="left:1209px;top:246px;" width="28" height="16" viewBox="0 0 28 16"><path d="M0.5 6.5 L6 1 L9.5 4.5 L5 7 Z" fill="#d82cf0" stroke="#6a0a80" stroke-width=".9"/><rect x="10" y="5.5" width="6" height="7.5" fill="#18b83a" stroke="#0a6a1a" stroke-width=".8"/><circle cx="9.2" cy="6.5" r="3.4" fill="#00eaff" stroke="#4a8aa0" stroke-width=".6"/><path d="M0 11 L5 6 L10 11 L5 16 Z" fill="#0050e6"/><path d="M20 9 H26 L23 12 Z" fill="#000"/></svg>
<div class="t" style="top:244.50px;font-family:'Liberation Sans',sans-serif;font-size:21px;line-height:21px;color:#fff;right:1508px;text-align:right;height:19px;overflow:hidden;">Msgs</div>
<div class="a" style="left:1467px;top:245px;width:1px;height:16px;background:#4a4;"></div>
<div class="a" style="left:1199px;top:262px;width:1719px;height:3px;background:#fff;"></div>
<div class="a" style="left:1199px;top:265px;width:9px;height:1215px;background:#fff;"></div>
<div class="a" style="left:1208px;top:265px;width:150px;height:1215px;background:#808080;"></div>
<div class="a" style="left:1361px;top:265px;width:100px;height:1215px;background:#808080;"></div>
<div class="a" style="left:1464px;top:265px;width:1434px;height:1215px;background:#000;"></div>
<div class="a" style="left:1535px;top:265px;width:1px;height:1215px;background:#9a9a9a;"></div>
<div class="a" style="left:1603px;top:265px;width:1px;height:1215px;background:#9a9a9a;"></div>
<div class="a" style="left:1671px;top:265px;width:1px;height:1215px;background:#9a9a9a;"></div>
<div class="a" style="left:1739px;top:265px;width:1px;height:1215px;background:#9a9a9a;"></div>
<div class="a" style="left:1807px;top:265px;width:1px;height:1215px;background:#9a9a9a;"></div>
<div class="a" style="left:1875px;top:265px;width:1px;height:1215px;background:#9a9a9a;"></div>
<div class="a" style="left:1943px;top:265px;width:1px;height:1215px;background:#9a9a9a;"></div>
<div class="a" style="left:2011px;top:265px;width:1px;height:1215px;background:#9a9a9a;"></div>
<div class="a" style="left:2079px;top:265px;width:1px;height:1215px;background:#9a9a9a;"></div>
<div class="a" style="left:2147px;top:265px;width:1px;height:1215px;background:#9a9a9a;"></div>
<div class="a" style="left:2215px;top:265px;width:1px;height:1215px;background:#9a9a9a;"></div>
<div class="a" style="left:2283px;top:265px;width:1px;height:1215px;background:#9a9a9a;"></div>
<div class="a" style="left:2351px;top:265px;width:1px;height:1215px;background:#9a9a9a;"></div>
<div class="a" style="left:2419px;top:265px;width:1px;height:1215px;background:#9a9a9a;"></div>
<div class="a" style="left:2487px;top:265px;width:1px;height:1215px;background:#9a9a9a;"></div>
<div class="a" style="left:2555px;top:265px;width:1px;height:1215px;background:#9a9a9a;"></div>
<div class="a" style="left:2623px;top:265px;width:1px;height:1215px;background:#9a9a9a;"></div>
<div class="a" style="left:2691px;top:265px;width:1px;height:1215px;background:#9a9a9a;"></div>
<div class="a" style="left:2759px;top:265px;width:1px;height:1215px;background:#9a9a9a;"></div>
<div class="a" style="left:2827px;top:265px;width:1px;height:1215px;background:#9a9a9a;"></div>
<div class="a" style="left:1468px;top:269px;width:1360px;height:1px;background:#90e090;"></div>
<div class="a" style="left:1468px;top:296px;width:1360px;height:1px;background:#90e090;"></div>
<div class="a" style="left:1467px;top:269px;width:1px;height:6px;background:#90e090;"></div>
<div class="a" style="left:1467px;top:291px;width:1px;height:6px;background:#90e090;"></div>
<div class="a" style="left:1467px;top:275px;width:1px;height:16px;background:#3050e0;"></div>
<div class="a" style="left:2147px;top:275px;width:1px;height:16px;background:#90e090;"></div>
<div class="a" style="left:2146px;top:269px;width:1px;height:7px;background:#90e090;"></div>
<div class="a" style="left:2148px;top:269px;width:1px;height:7px;background:#90e090;"></div>
<div class="a" style="left:2146px;top:290px;width:1px;height:7px;background:#90e090;"></div>
<div class="a" style="left:2148px;top:290px;width:1px;height:7px;background:#90e090;"></div>
<div class="a" style="left:2147px;top:269px;width:1px;height:1px;background:#9a9a9a;"></div>
<div class="a" style="left:2147px;top:296px;width:1px;height:1px;background:#9a9a9a;"></div>
<div class="a" style="left:1468px;top:301px;width:1360px;height:1px;background:#90e090;"></div>
<div class="a" style="left:1468px;top:328px;width:1360px;height:1px;background:#90e090;"></div>
<div class="a" style="left:1467px;top:301px;width:1px;height:6px;background:#90e090;"></div>
<div class="a" style="left:1467px;top:323px;width:1px;height:6px;background:#90e090;"></div>
<div class="a" style="left:1467px;top:307px;width:1px;height:16px;background:#3050e0;"></div>
<div class="a" style="left:2147px;top:307px;width:1px;height:16px;background:#90e090;"></div>
<div class="a" style="left:2146px;top:301px;width:1px;height:7px;background:#90e090;"></div>
<div class="a" style="left:2148px;top:301px;width:1px;height:7px;background:#90e090;"></div>
<div class="a" style="left:2146px;top:322px;width:1px;height:7px;background:#90e090;"></div>
<div class="a" style="left:2148px;top:322px;width:1px;height:7px;background:#90e090;"></div>
<div class="a" style="left:2147px;top:301px;width:1px;height:1px;background:#9a9a9a;"></div>
<div class="a" style="left:2147px;top:328px;width:1px;height:1px;background:#9a9a9a;"></div>
<div class="a" style="left:1468px;top:333px;width:1360px;height:1px;background:#90e090;"></div>
<div class="a" style="left:1468px;top:360px;width:1360px;height:1px;background:#90e090;"></div>
<div class="a" style="left:1467px;top:333px;width:1px;height:6px;background:#90e090;"></div>
<div class="a" style="left:1467px;top:355px;width:1px;height:6px;background:#90e090;"></div>
<div class="a" style="left:1467px;top:339px;width:1px;height:16px;background:#3050e0;"></div>
<div class="a" style="left:2147px;top:339px;width:1px;height:16px;background:#90e090;"></div>
<div class="a" style="left:2146px;top:333px;width:1px;height:7px;background:#90e090;"></div>
<div class="a" style="left:2148px;top:333px;width:1px;height:7px;background:#90e090;"></div>
<div class="a" style="left:2146px;top:354px;width:1px;height:7px;background:#90e090;"></div>
<div class="a" style="left:2148px;top:354px;width:1px;height:7px;background:#90e090;"></div>
<div class="a" style="left:2147px;top:333px;width:1px;height:1px;background:#9a9a9a;"></div>
<div class="a" style="left:2147px;top:360px;width:1px;height:1px;background:#9a9a9a;"></div>
<div class="a" style="left:1468px;top:365px;width:1360px;height:1px;background:#90e090;"></div>
<div class="a" style="left:1468px;top:392px;width:1360px;height:1px;background:#90e090;"></div>
<div class="a" style="left:1467px;top:365px;width:1px;height:6px;background:#90e090;"></div>
<div class="a" style="left:1467px;top:387px;width:1px;height:6px;background:#90e090;"></div>
<div class="a" style="left:1467px;top:371px;width:1px;height:16px;background:#3050e0;"></div>
<div class="t" style="top:275.50px;font-family:'Liberation Sans',sans-serif;font-size:21px;line-height:21px;color:#fff;left:1472.5px;">000</div>
<div class="t" style="top:275.50px;font-family:'Liberation Sans',sans-serif;font-size:21px;line-height:21px;color:#fff;left:2153.5px;">155</div>
<div class="t" style="top:307.50px;font-family:'Liberation Sans',sans-serif;font-size:21px;line-height:21px;color:#fff;left:1472.5px;">0</div>
<div class="t" style="top:307.50px;font-family:'Liberation Sans',sans-serif;font-size:21px;line-height:21px;color:#fff;left:2153.5px;">7</div>
<div class="t" style="top:339.50px;font-family:'Liberation Sans',sans-serif;font-size:21px;line-height:21px;color:#fff;left:1472.5px;">000</div>
<div class="t" style="top:339.50px;font-family:'Liberation Sans',sans-serif;font-size:21px;line-height:21px;color:#fff;left:2153.5px;">ccc</div>
<div class="t" style="top:371.50px;font-family:'Liberation Sans',sans-serif;font-size:21px;line-height:21px;color:#fff;left:1472.5px;letter-spacing:-0.68px;">000000000000000000000000000000000000000000000000000000000000</div>
<svg class="a" style="left:1213px;top:279px;" width="11" height="11" viewBox="0 0 11 11"><defs><linearGradient id="pmg" x1="0" y1="0" x2="1" y2="1"><stop offset="0" stop-color="#fff"/><stop offset="1" stop-color="#c8d0e8"/></linearGradient></defs><rect x="0.5" y="0.5" width="10" height="10" rx="1.5" fill="url(#pmg)" stroke="#8a94b0"/><path d="M2.5 5.5 H8.5" stroke="#000" stroke-width="1.2"/><path d="M5.5 2.5 V8.5" stroke="#000" stroke-width="1.2"/></svg>
<div class="a" style="left:1224px;top:284px;width:5px;height:1px;background:#a0a0a0;"></div>
<svg class="a" style="left:1228px;top:276px;" width="15" height="15" viewBox="0 0 15 15"><path d="M7.5 0 L15 7.5 L7.5 15 L0 7.5 Z" fill="#1a8ac8"/><path d="M7.5 0 L15 7.5 L7.5 9 L0 7.5 Z" fill="#7ad8f8"/><path d="M7.5 3 L12 7.5 L7.5 12 L3 7.5 Z" fill="#10b8f0"/></svg>
<div class="t" style="top:276.50px;font-family:'Liberation Sans',sans-serif;font-size:21px;line-height:21px;color:#fff;left:1253.75px;">/tb_pic_r...</div>
<svg class="a" style="left:1213px;top:311px;" width="11" height="11" viewBox="0 0 11 11"><defs><linearGradient id="pmg" x1="0" y1="0" x2="1" y2="1"><stop offset="0" stop-color="#fff"/><stop offset="1" stop-color="#c8d0e8"/></linearGradient></defs><rect x="0.5" y="0.5" width="10" height="10" rx="1.5" fill="url(#pmg)" stroke="#8a94b0"/><path d="M2.5 5.5 H8.5" stroke="#000" stroke-width="1.2"/><path d="M5.5 2.5 V8.5" stroke="#000" stroke-width="1.2"/></svg>
<div class="a" style="left:1224px;top:316px;width:5px;height:1px;background:#a0a0a0;"></div>
<svg class="a" style="left:1228px;top:308px;" width="15" height="15" viewBox="0 0 15 15"><path d="M7.5 0 L15 7.5 L7.5 15 L0 7.5 Z" fill="#1a8ac8"/><path d="M7.5 0 L15 7.5 L7.5 9 L0 7.5 Z" fill="#7ad8f8"/><path d="M7.5 3 L12 7.5 L7.5 12 L3 7.5 Z" fill="#10b8f0"/></svg>
<div class="t" style="top:308.50px;font-family:'Liberation Sans',sans-serif;font-size:21px;line-height:21px;color:#fff;left:1253.75px;">/tb_pic_r...</div>
<svg class="a" style="left:1213px;top:343px;" width="11" height="11" viewBox="0 0 11 11"><defs><linearGradient id="pmg" x1="0" y1="0" x2="1" y2="1"><stop offset="0" stop-color="#fff"/><stop offset="1" stop-color="#c8d0e8"/></linearGradient></defs><rect x="0.5" y="0.5" width="10" height="10" rx="1.5" fill="url(#pmg)" stroke="#8a94b0"/><path d="M2.5 5.5 H8.5" stroke="#000" stroke-width="1.2"/><path d="M5.5 2.5 V8.5" stroke="#000" stroke-width="1.2"/></svg>
<div class="a" style="left:1224px;top:348px;width:5px;height:1px;background:#a0a0a0;"></div>
<svg class="a" style="left:1228px;top:340px;" width="15" height="15" viewBox="0 0 15 15"><path d="M7.5 0 L15 7.5 L7.5 15 L0 7.5 Z" fill="#1a8ac8"/><path d="M7.5 0 L15 7.5 L7.5 9 L0 7.5 Z" fill="#7ad8f8"/><path d="M7.5 3 L12 7.5 L7.5 12 L3 7.5 Z" fill="#10b8f0"/></svg>
<div class="t" style="top:340.50px;font-family:'Liberation Sans',sans-serif;font-size:21px;line-height:21px;color:#fff;left:1253.75px;">/tb_pic_r...</div>
<svg class="a" style="left:1213px;top:375px;" width="11" height="11" viewBox="0 0 11 11"><defs><linearGradient id="pmg" x1="0" y1="0" x2="1" y2="1"><stop offset="0" stop-color="#fff"/><stop offset="1" stop-color="#c8d0e8"/></linearGradient></defs><rect x="0.5" y="0.5" width="10" height="10" rx="1.5" fill="url(#pmg)" stroke="#8a94b0"/><path d="M2.5 5.5 H8.5" stroke="#000" stroke-width="1.2"/><path d="M5.5 2.5 V8.5" stroke="#000" stroke-width="1.2"/></svg>
<div class="a" style="left:1224px;top:380px;width:5px;height:1px;background:#a0a0a0;"></div>
<svg class="a" style="left:1228px;top:372px;" width="15" height="15" viewBox="0 0 15 15"><path d="M7.5 0 L15 7.5 L7.5 15 L0 7.5 Z" fill="#1a8ac8"/><path d="M7.5 0 L15 7.5 L7.5 9 L0 7.5 Z" fill="#7ad8f8"/><path d="M7.5 3 L12 7.5 L7.5 12 L3 7.5 Z" fill="#10b8f0"/></svg>
<div class="t" style="top:372.50px;font-family:'Liberation Sans',sans-serif;font-size:21px;line-height:21px;color:#fff;left:1253.75px;">/tb_pic_r...</div>
<div class="t" style="top:277.50px;font-family:'Liberation Sans',sans-serif;font-size:21px;line-height:21px;color:#fff;left:1363.5px;">9'h155</div>
<div class="t" style="top:309.50px;font-family:'Liberation Sans',sans-serif;font-size:21px;line-height:21px;color:#fff;left:1363.5px;">3'h7</div>
<div class="t" style="top:341.50px;font-family:'Liberation Sans',sans-serif;font-size:21px;line-height:21px;color:#fff;left:1363.5px;">12'hccc</div>
<div class="t" style="top:373.50px;font-family:'Liberation Sans',sans-serif;font-size:21px;line-height:21px;color:#fff;left:1363.5px;">240'h00...</div>
<div class="a" style="left:1212px;top:395px;width:142px;height:1px;background:#000;"></div>
<svg class="a" style="left:1209px;top:390px;" width="7" height="11" viewBox="0 0 7 11"><path d="M0.5 0.5 L6 5.5 L0.5 10.5 Z" fill="none" stroke="#000"/></svg>
<div class="a" style="left:1363px;top:395px;width:94px;height:1px;background:#000;"></div>
<div class="a" style="left:2901px;top:265px;width:17px;height:1215px;background:#f0f0f0;"></div>
<svg class="a" style="left:2902px;top:266px;" width="16" height="16" viewBox="0 0 16 16"><rect x="0" y="0" width="16" height="16" fill="#f0f0f0"/><path d="M15.5 0 V15.5 H0" stroke="#888" fill="none"/><path d="M3 10 H12 L7.5 6 Z" fill="#000"/></svg>
<svg class="a" style="left:2902px;top:1462px;" width="16" height="16" viewBox="0 0 16 16"><rect x="0" y="0" width="16" height="16" fill="#f0f0f0"/><path d="M15.5 0 V15.5 H0" stroke="#888" fill="none"/><path d="M3 6 H12 L7.5 10 Z" fill="#000"/></svg>
<div class="a" style="left:2902px;top:283px;width:15px;height:1178px;background:#f0f0f0;box-sizing:border-box;border-right:2px solid #999;border-bottom:1px solid #999;"></div>
<div class="a" style="left:1199px;top:1480px;width:1719px;height:3px;background:#fff;"></div>
<div class="a" style="left:1199px;top:1483px;width:45px;height:37px;background:#808080;"></div>
<div class="a" style="left:1244px;top:1483px;width:114px;height:37px;background:#fff;"></div>
<div class="a" style="left:1361px;top:1483px;width:100px;height:37px;background:#fff;"></div>
<div class="a" style="left:1464px;top:1483px;width:1434px;height:70px;background:#000;"></div>
<div class="a" style="left:2901px;top:1483px;width:17px;height:70px;background:#808080;"></div>
<svg class="a" style="left:1208px;top:1497px;" width="36" height="14" viewBox="0 0 36 14"><path d="M1 11 L4 3 L8 11 Z" fill="#888" stroke="#555"/><rect x="11" y="4" width="10" height="9" fill="#8ab0d8" stroke="#46a"/><path d="M12 7 H20 M12 10 H18" stroke="#fff"/><circle cx="29" cy="7" r="5.5" fill="#5c5" stroke="#3a3"/><path d="M26 7 H32 M29 4 V10" stroke="#fff" stroke-width="1.5"/></svg>
<div class="t" style="top:1491.50px;font-family:'Liberation Sans',sans-serif;font-size:21px;line-height:21px;color:#000;right:1615.25px;text-align:right;">Now</div>
<div class="t" style="top:1491.50px;font-family:'Liberation Sans',sans-serif;font-size:21px;line-height:21px;color:#000;right:1513px;text-align:right;">20000&nbsp;ps</div>
<div class="a" style="left:1199px;top:1520px;width:159px;height:33px;background:#808080;"></div>
<div class="a" style="left:1361px;top:1520px;width:100px;height:33px;background:#808080;"></div>
<svg class="a" style="left:1211px;top:1531px;" width="38" height="16" viewBox="0 0 38 16"><rect x="1" y="7" width="9" height="8" fill="#e8c040"/><path d="M3 7 V4 Q5.5 1 8 4" stroke="#c9a030" fill="none" stroke-width="1.4"/><path d="M14 14 L22 6" stroke="#6a9ae0" stroke-width="2.5"/><path d="M20 3 L24 7" stroke="#555" stroke-width="2"/><circle cx="32" cy="7" r="5.5" fill="#e44"/><path d="M29 7 H35" stroke="#fff" stroke-width="1.8"/></svg>
<div class="t" style="top:1526.50px;font-family:'Liberation Sans',sans-serif;font-size:21px;line-height:21px;color:#fff;right:1615.25px;text-align:right;">Cursor&nbsp;1</div>
<div class="t" style="top:1526.50px;font-family:'Liberation Sans',sans-serif;font-size:21px;line-height:21px;color:#fff;right:1513px;text-align:right;">0&nbsp;ps</div>
<div class="a" style="left:1494px;top:1486px;width:1px;height:4px;background:#30d030;"></div>
<div class="a" style="left:1521px;top:1486px;width:1px;height:4px;background:#30d030;"></div>
<div class="a" style="left:1549px;top:1486px;width:1px;height:4px;background:#30d030;"></div>
<div class="a" style="left:1576px;top:1486px;width:1px;height:4px;background:#30d030;"></div>
<div class="a" style="left:1603px;top:1483px;width:1px;height:8px;background:#30d030;"></div>
<div class="a" style="left:1630px;top:1486px;width:1px;height:4px;background:#30d030;"></div>
<div class="a" style="left:1657px;top:1486px;width:1px;height:4px;background:#30d030;"></div>
<div class="a" style="left:1685px;top:1486px;width:1px;height:4px;background:#30d030;"></div>
<div class="a" style="left:1712px;top:1486px;width:1px;height:4px;background:#30d030;"></div>
<div class="a" style="left:1739px;top:1483px;width:1px;height:8px;background:#30d030;"></div>
<div class="a" style="left:1766px;top:1486px;width:1px;height:4px;background:#30d030;"></div>
<div class="a" style="left:1793px;top:1486px;width:1px;height:4px;background:#30d030;"></div>
<div class="a" style="left:1821px;top:1486px;width:1px;height:4px;background:#30d030;"></div>
<div class="a" style="left:1848px;top:1486px;width:1px;height:4px;background:#30d030;"></div>
<div class="a" style="left:1875px;top:1483px;width:1px;height:8px;background:#30d030;"></div>
<div class="a" style="left:1902px;top:1486px;width:1px;height:4px;background:#30d030;"></div>
<div class="a" style="left:1929px;top:1486px;width:1px;height:4px;background:#30d030;"></div>
<div class="a" style="left:1957px;top:1486px;width:1px;height:4px;background:#30d030;"></div>
<div class="a" style="left:1984px;top:1486px;width:1px;height:4px;background:#30d030;"></div>
<div class="a" style="left:2011px;top:1483px;width:1px;height:8px;background:#30d030;"></div>
<div class="a" style="left:2038px;top:1486px;width:1px;height:4px;background:#30d030;"></div>
<div class="a" style="left:2065px;top:1486px;width:1px;height:4px;background:#30d030;"></div>
<div class="a" style="left:2093px;top:1486px;width:1px;height:4px;background:#30d030;"></div>
<div class="a" style="left:2120px;top:1486px;width:1px;height:4px;background:#30d030;"></div>
<div class="a" style="left:2147px;top:1483px;width:1px;height:8px;background:#30d030;"></div>
<div class="a" style="left:2174px;top:1486px;width:1px;height:4px;background:#30d030;"></div>
<div class="a" style="left:2201px;top:1486px;width:1px;height:4px;background:#30d030;"></div>
<div class="a" style="left:2229px;top:1486px;width:1px;height:4px;background:#30d030;"></div>
<div class="a" style="left:2256px;top:1486px;width:1px;height:4px;background:#30d030;"></div>
<div class="a" style="left:2283px;top:1483px;width:1px;height:8px;background:#30d030;"></div>
<div class="a" style="left:2310px;top:1486px;width:1px;height:4px;background:#30d030;"></div>
<div class="a" style="left:2337px;top:1486px;width:1px;height:4px;background:#30d030;"></div>
<div class="a" style="left:2365px;top:1486px;width:1px;height:4px;background:#30d030;"></div>
<div class="a" style="left:2392px;top:1486px;width:1px;height:4px;background:#30d030;"></div>
<div class="a" style="left:2419px;top:1483px;width:1px;height:8px;background:#30d030;"></div>
<div class="a" style="left:2446px;top:1486px;width:1px;height:4px;background:#30d030;"></div>
<div class="a" style="left:2473px;top:1486px;width:1px;height:4px;background:#30d030;"></div>
<div class="a" style="left:2501px;top:1486px;width:1px;height:4px;background:#30d030;"></div>
<div class="a" style="left:2528px;top:1486px;width:1px;height:4px;background:#30d030;"></div>
<div class="a" style="left:2555px;top:1483px;width:1px;height:8px;background:#30d030;"></div>
<div class="a" style="left:2582px;top:1486px;width:1px;height:4px;background:#30d030;"></div>
<div class="a" style="left:2609px;top:1486px;width:1px;height:4px;background:#30d030;"></div>
<div class="a" style="left:2637px;top:1486px;width:1px;height:4px;background:#30d030;"></div>
<div class="a" style="left:2664px;top:1486px;width:1px;height:4px;background:#30d030;"></div>
<div class="a" style="left:2691px;top:1483px;width:1px;height:8px;background:#30d030;"></div>
<div class="a" style="left:2718px;top:1486px;width:1px;height:4px;background:#30d030;"></div>
<div class="a" style="left:2745px;top:1486px;width:1px;height:4px;background:#30d030;"></div>
<div class="a" style="left:2773px;top:1486px;width:1px;height:4px;background:#30d030;"></div>
<div class="a" style="left:2800px;top:1486px;width:1px;height:4px;background:#30d030;"></div>
<div class="a" style="left:2827px;top:1483px;width:1px;height:8px;background:#30d030;"></div>
<div class="a" style="left:2854px;top:1486px;width:1px;height:4px;background:#30d030;"></div>
<div class="a" style="left:2881px;top:1486px;width:1px;height:4px;background:#30d030;"></div>
<div class="a" style="left:1467px;top:1483px;width:1px;height:37px;background:#c9a000;"></div>
<div class="t" style="top:1499.57px;font-family:'Liberation Sans',sans-serif;font-size:21.5px;line-height:21.5px;color:#3ee83e;left:1439.5px;width:600px;text-align:center;">4000&nbsp;ps</div>
<div class="t" style="top:1499.57px;font-family:'Liberation Sans',sans-serif;font-size:21.5px;line-height:21.5px;color:#3ee83e;left:1711.5px;width:600px;text-align:center;">8000&nbsp;ps</div>
<div class="t" style="top:1499.57px;font-family:'Liberation Sans',sans-serif;font-size:21.5px;line-height:21.5px;color:#3ee83e;left:1983.5px;width:600px;text-align:center;">12000&nbsp;ps</div>
<div class="t" style="top:1499.57px;font-family:'Liberation Sans',sans-serif;font-size:21.5px;line-height:21.5px;color:#3ee83e;left:2255.5px;width:600px;text-align:center;">16000&nbsp;ps</div>
<div class="t" style="top:1499.57px;font-family:'Liberation Sans',sans-serif;font-size:21.5px;line-height:21.5px;color:#3ee83e;left:2527.5px;width:600px;text-align:center;">20000&nbsp;ps</div>
<div class="t" style="top:1499.57px;font-family:'Liberation Sans',sans-serif;font-size:21.5px;line-height:21.5px;color:#3ee83e;left:1467px;">ps</div>
<div class="a" style="left:1464px;top:1520px;width:1431px;height:1px;background:#9a9a9a;"></div>
<div class="a" style="left:1467px;top:1521px;width:44px;height:31px;background:transparent;box-sizing:border-box;border:1px solid #e0b000;overflow:hidden;"></div>
<div class="t" style="top:1532.15px;font-family:'Liberation Sans',sans-serif;font-size:22px;line-height:22px;color:#ffd000;left:1469px;width:40px;overflow:hidden;">0&nbsp;ps</div>
<div class="a" style="left:1199px;top:1553px;width:1719px;height:2px;background:#fff;"></div>
<div class="a" style="left:1199px;top:1555px;width:159px;height:35px;background:#808080;"></div>
<div class="a" style="left:1361px;top:1555px;width:100px;height:35px;background:#808080;"></div>
<div class="a" style="left:1464px;top:1555px;width:1434px;height:35px;background:#808080;"></div>
<div class="a" style="left:2901px;top:1555px;width:17px;height:35px;background:#808080;"></div>
<svg class="a" style="left:1208px;top:1556px;" width="33" height="33" viewBox="0 0 33 33"><rect x="0" y="0" width="33" height="33" fill="#f0f0f0"/><path d="M32.5 0 V32.5 H0" stroke="#888" fill="none"/><path d="M0.5 33 V0.5 H33" stroke="#fff" fill="none"/><path d="M20.5 8.5 V24.5 L12.5 16.5 Z" fill="#000"/></svg>
<div class="a" style="left:1241px;top:1556px;width:51px;height:33px;background:#ececec;box-sizing:border-box;border-right:1px solid #888;border-bottom:1px solid #888;"></div>
<div class="a" style="left:1292px;top:1556px;width:33px;height:33px;background:#f6f6f6;"></div>
<svg class="a" style="left:1325px;top:1556px;" width="33" height="33" viewBox="0 0 33 33"><rect x="0" y="0" width="33" height="33" fill="#f0f0f0"/><path d="M32.5 0 V32.5 H0" stroke="#888" fill="none"/><path d="M0.5 33 V0.5 H33" stroke="#fff" fill="none"/><path d="M12.5 8.5 V24.5 L20.5 16.5 Z" fill="#000"/></svg>
<svg class="a" style="left:1361px;top:1556px;" width="33" height="33" viewBox="0 0 33 33"><rect x="0" y="0" width="33" height="33" fill="#f0f0f0"/><path d="M32.5 0 V32.5 H0" stroke="#888" fill="none"/><path d="M0.5 33 V0.5 H33" stroke="#fff" fill="none"/><path d="M20.5 8.5 V24.5 L12.5 16.5 Z" fill="#000"/></svg>
<div class="a" style="left:1395px;top:1556px;width:16px;height:33px;background:#ececec;box-sizing:border-box;border-right:1px solid #888;border-bottom:1px solid #888;"></div>
<div class="a" style="left:1411px;top:1556px;width:17px;height:33px;background:#f6f6f6;"></div>
<svg class="a" style="left:1428px;top:1556px;" width="33" height="33" viewBox="0 0 33 33"><rect x="0" y="0" width="33" height="33" fill="#f0f0f0"/><path d="M32.5 0 V32.5 H0" stroke="#888" fill="none"/><path d="M0.5 33 V0.5 H33" stroke="#fff" fill="none"/><path d="M12.5 8.5 V24.5 L20.5 16.5 Z" fill="#000"/></svg>
<div class="a" style="left:1465px;top:1565px;width:1432px;height:16px;background:#f0f0f0;box-sizing:border-box;border-bottom:1px solid #888;"></div>
<svg class="a" style="left:1465px;top:1565px;" width="16" height="16" viewBox="0 0 16 16"><rect x="0" y="0" width="16" height="16" fill="#f0f0f0"/><path d="M15.5 0 V15.5 H0" stroke="#888" fill="none"/><path d="M10 4 V12 L6 8 Z" fill="#000"/></svg>
<svg class="a" style="left:2880px;top:1565px;" width="17" height="16" viewBox="0 0 17 16"><rect x="0" y="0" width="17" height="16" fill="#f0f0f0"/><path d="M16.5 0 V15.5 H0" stroke="#888" fill="none"/><path d="M7 4 V12 L11 8 Z" fill="#000"/></svg>
<div class="a" style="left:2873px;top:1566px;width:6px;height:14px;background:#c8c8c8;"></div>
<div class="a" style="left:1196px;top:1590px;width:1725px;height:4px;background:#fff;"></div>
<div class="a" style="left:2918px;top:244px;width:2px;height:1350px;background:#fff;"></div>
<div class="a" style="left:1196px;top:1594px;width:1704px;height:36px;background:#f0f0f0;"></div>
<div class="a" style="left:1196px;top:1596px;width:1704px;height:1px;background:#000;"></div>
<div class="a" style="left:1196px;top:1596px;width:96px;height:33px;background:#f0f0f0;box-sizing:border-box;border-left:1px solid #000;border-right:1px solid #000;border-bottom:1px solid #000;border-radius:0 0 4px 4px;"></div>
<svg class="a" style="left:1200px;top:1603px;" width="17" height="17" viewBox="0 0 17 17"><rect x="0" y="0" width="16" height="16" fill="#000"/><rect x="0" y="0" width="15" height="15" fill="#fff"/><rect x="1" y="1" width="14" height="14" fill="#c4c4c4"/><rect x="2" y="2" width="12" height="2" fill="#fff"/><rect x="2" y="6" width="12" height="8" fill="#000"/><path d="M2 7.5 H4.5 V9.5 H6.5 V7.5 H9.5 V9.5 H14 M2 11 H5.5 V13.5 H7.5 V12" stroke="#0a9a3a" stroke-width="1.1" fill="none"/><rect x="6" y="6" width="1" height="8" fill="#40e8f8"/><rect x="8" y="11.5" width="6" height="1.6" fill="#5010e0"/></svg>
<div class="t" style="top:1603.00px;font-family:'Liberation Sans',sans-serif;font-size:21px;line-height:21px;color:#000;left:1221px;">Wave</div>
<svg class="a" style="left:1280px;top:1607px;" width="9" height="9" viewBox="0 0 9 9"><path d="M1 1 L8 8 M8 1 L1 8" stroke="#b4b4b4" stroke-width="2"/></svg>
<div class="a" style="left:1292px;top:1596px;width:127px;height:33px;background:#c8c8c8;box-sizing:border-box;border-left:1px solid #000;border-right:1px solid #000;border-bottom:1px solid #000;border-radius:0 0 4px 4px;border-top:1px solid #000;"></div>
<svg class="a" style="left:1296px;top:1603px;" width="17" height="17" viewBox="0 0 17 17"><rect x="0" y="0" width="16" height="16" fill="#000"/><rect x="1" y="1" width="14" height="14" fill="#0a4ad8"/><path d="M3 3 H7 V8 H12 M5 5 V12 H9 M11 3 V6" stroke="#ff0" fill="none"/><path d="M3 10 H6 M10 10 V13" stroke="#f0f" /></svg>
<div class="t" style="top:1603.00px;font-family:'Liberation Sans',sans-serif;font-size:21px;line-height:21px;color:#000;left:1318.75px;">Dataflow</div>
<svg class="a" style="left:1406px;top:1607px;" width="9" height="9" viewBox="0 0 9 9"><path d="M1 1 L8 8 M8 1 L1 8" stroke="#b4b4b4" stroke-width="2"/></svg>
<div class="a" style="left:1419px;top:1596px;width:107px;height:33px;background:#c8c8c8;box-sizing:border-box;border-left:1px solid #000;border-right:1px solid #000;border-bottom:1px solid #000;border-radius:0 0 4px 4px;border-top:1px solid #000;"></div>
<svg class="a" style="left:1423px;top:1603px;" width="17" height="17" viewBox="0 0 17 17"><rect x="0" y="0" width="16" height="16" fill="#000"/><rect x="0" y="0" width="15" height="15" fill="#fff"/><rect x="1" y="1" width="14" height="14" fill="#c4c4c4"/><rect x="2" y="2" width="12" height="2" fill="#fff"/><rect x="2" y="6" width="12" height="8" fill="#000"/><path d="M2 7.5 H4.5 V9.5 H6.5 V7.5 H9.5 V9.5 H14 M2 11 H5.5 V13.5 H7.5 V12" stroke="#0a9a3a" stroke-width="1.1" fill="none"/><rect x="6" y="6" width="1" height="8" fill="#40e8f8"/><rect x="8" y="11.5" width="6" height="1.6" fill="#5010e0"/></svg>
<div class="t" style="top:1603.00px;font-family:'Liberation Sans',sans-serif;font-size:21px;line-height:21px;color:#000;left:1445px;">Wave1</div>
<svg class="a" style="left:1514px;top:1607px;" width="9" height="9" viewBox="0 0 9 9"><path d="M1 1 L8 8 M8 1 L1 8" stroke="#b4b4b4" stroke-width="2"/></svg>
<svg class="a" style="left:2900px;top:1597px;" width="21" height="16" viewBox="0 0 21 16"><rect x="0" y="0" width="10" height="15" fill="#f0f0f0"/><rect x="11" y="0" width="10" height="15" fill="#f0f0f0"/><path d="M9.5 0 V14.5 H0 M20.5 0 V14.5 H11" stroke="#888" fill="none"/><path d="M6 4 L3 8 L6 12 M8 4 L5 8 L8 12 M14 4 L17 8 L14 12 M12 4 L15 8 L12 12" stroke="#000" fill="none" stroke-width=".9"/></svg>
<div class="a" style="left:42px;top:1636px;width:2880px;height:1px;background:#a0a0a0;"></div>
<div class="a" style="left:42px;top:1637px;width:2880px;height:205px;background:#f0f0f0;"></div>
<div class="a" style="left:43px;top:1639px;width:2878px;height:30px;background:#f0f0f0;"></div>
<svg class="a" style="left:44px;top:1645px;" width="17" height="17" viewBox="0 0 17 17"><path d="M1 15 L2.5 4 Q3 1 8 1 Q13 1 13.5 4 L15 15 L12.5 13 L12 6 Q11.5 4 8 4 Q4.5 4 4 6 L3.5 13 Z" fill="#8a8a8a" stroke="#333" stroke-width=".7"/><path d="M4.5 6.5 Q5 4.5 8 4.5 Q11 4.5 11.5 6.5 V9 H4.5 Z" fill="#fff"/></svg>
<div class="t" style="top:1645.16px;font-family:'Liberation Sans',sans-serif;font-size:21.4px;line-height:21.4px;color:#000;left:64px;">Transcript</div>
<div class="a" style="left:162px;top:1650px;width:2706px;height:2px;background:#fff;"></div>
<div class="a" style="left:162px;top:1652px;width:2706px;height:1px;background:#6e6e6e;"></div>
<div class="a" style="left:162px;top:1655px;width:2706px;height:2px;background:#fff;"></div>
<div class="a" style="left:162px;top:1657px;width:2706px;height:1px;background:#6e6e6e;"></div>
<div class="a" style="left:2867px;top:1650px;width:1px;height:8px;background:#6e6e6e;"></div>
<div class="a" style="left:1506px;top:1648px;width:20px;height:12px;background:#f0f0f0;"></div>
<svg class="a" style="left:1508px;top:1651px;" width="18" height="8" viewBox="0 0 18 8"><rect x="0" y="0" width="1.2" height="1.2" fill="#000"/><rect x="1" y="3" width="1.2" height="1.2" fill="#000"/><rect x="0" y="6" width="1.2" height="1.2" fill="#000"/><rect x="3" y="0" width="1.2" height="1.2" fill="#000"/><rect x="4" y="3" width="1.2" height="1.2" fill="#000"/><rect x="3" y="6" width="1.2" height="1.2" fill="#000"/><rect x="6" y="0" width="1.2" height="1.2" fill="#000"/><rect x="7" y="3" width="1.2" height="1.2" fill="#000"/><rect x="6" y="6" width="1.2" height="1.2" fill="#000"/><rect x="9" y="0" width="1.2" height="1.2" fill="#000"/><rect x="10" y="3" width="1.2" height="1.2" fill="#000"/><rect x="9" y="6" width="1.2" height="1.2" fill="#000"/><rect x="12" y="0" width="1.2" height="1.2" fill="#000"/><rect x="13" y="3" width="1.2" height="1.2" fill="#000"/><rect x="12" y="6" width="1.2" height="1.2" fill="#000"/><rect x="15" y="0" width="1.2" height="1.2" fill="#000"/><rect x="16" y="3" width="1.2" height="1.2" fill="#000"/><rect x="15" y="6" width="1.2" height="1.2" fill="#000"/></svg>
<svg class="a" style="left:2872px;top:1646px;" width="14" height="14" viewBox="0 0 14 14"><rect x="0" y="0" width="14" height="14" fill="#f0f0f0"/><path d="M13.5 0 V13.5 H0" stroke="#888" fill="none"/><path d="M7 3 V11 M3 7 H11" stroke="#000" stroke-width="2"/></svg>
<svg class="a" style="left:2888px;top:1646px;" width="14" height="14" viewBox="0 0 14 14"><rect x="0" y="0" width="14" height="14" fill="#f0f0f0"/><path d="M13.5 0 V13.5 H0" stroke="#888" fill="none"/><rect x="2.5" y="6.5" width="5" height="5" fill="none" stroke="#000" stroke-width="1.3"/><path d="M6 8 L11 3 M8 3 H11 V6" stroke="#000" stroke-width="1.5" fill="none"/></svg>
<svg class="a" style="left:2904px;top:1646px;" width="14" height="14" viewBox="0 0 14 14"><rect x="0" y="0" width="14" height="14" fill="#f0f0f0"/><path d="M13.5 0 V13.5 H0" stroke="#888" fill="none"/><path d="M3 3 L11 11 M11 3 L3 11" stroke="#000" stroke-width="1.6"/></svg>
<div class="a" style="left:47px;top:1669px;width:2839px;height:173px;background:#fff;"></div>
<div class="a" style="left:156px;top:1669px;width:2730px;height:1px;background:#000;"></div>
<div class="a" style="left:156px;top:1670px;width:2730px;height:0.5px;background:#444;"></div>
<div class="a" style="left:47px;top:1669px;width:3px;height:1px;background:#000;"></div>
<div class="a" style="left:47px;top:1669px;width:1px;height:173px;background:#000;"></div>
<div class="t" style="top:1680.47px;font-family:'Liberation Mono',monospace;font-size:23.333px;line-height:23.333px;color:#1818ff;left:50.5px;">#&nbsp;**&nbsp;Note:&nbsp;$finish&nbsp;&nbsp;&nbsp;&nbsp;:&nbsp;C:/Users/Microsoft/Documents/code/eetree/tb_pic_ram.v(38)</div>
<div class="t" style="top:1707.47px;font-family:'Liberation Mono',monospace;font-size:23.333px;line-height:23.333px;color:#1818ff;left:50.5px;">#&nbsp;&nbsp;&nbsp;&nbsp;Time:&nbsp;20&nbsp;ns&nbsp;&nbsp;Iteration:&nbsp;0&nbsp;&nbsp;Instance:&nbsp;/tb_pic_ram</div>
<div class="t" style="top:1734.47px;font-family:'Liberation Mono',monospace;font-size:23.333px;line-height:23.333px;color:#2a942a;left:50.5px;">#&nbsp;1</div>
<div class="t" style="top:1761.47px;font-family:'Liberation Mono',monospace;font-size:23.333px;line-height:23.333px;color:#2a942a;left:50.5px;">#&nbsp;Break&nbsp;in&nbsp;Module&nbsp;tb_pic_ram&nbsp;at&nbsp;C:/Users/Microsoft/Documents/code/eetree/tb_pic_ram.v&nbsp;line&nbsp;38</div>
<div class="t" style="top:1816.85px;font-family:'Liberation Sans',sans-serif;font-size:20.6px;line-height:20.6px;color:#000080;left:49px;">VSIM&nbsp;72&gt;</div>
<div class="a" style="left:2886px;top:1669px;width:34px;height:173px;background:#f0f0f0;"></div>
<div class="a" style="left:2886px;top:1701px;width:34px;height:107px;background:#ececec;"></div>
<svg class="a" style="left:2887px;top:1670px;" width="33" height="32" viewBox="0 0 33 32"><rect x="0" y="0" width="33" height="32" fill="#f0f0f0"/><path d="M32.5 0 V31.5 H0" stroke="#888" fill="none" stroke-width="1.5"/><path d="M7.5 21.0 H25.5 L16.5 11.0 Z" fill="#000"/></svg>
<div class="a" style="left:2887px;top:1791px;width:33px;height:17px;background:#f0f0f0;box-sizing:border-box;border-right:2px solid #888;border-bottom:1px solid #888;"></div>
<svg class="a" style="left:2887px;top:1809px;" width="33" height="33" viewBox="0 0 33 33"><rect x="0" y="0" width="33" height="33" fill="#f0f0f0"/><path d="M32.5 0 V32.5 H0" stroke="#888" fill="none" stroke-width="1.5"/><path d="M7.5 11.5 H25.5 L16.5 21.5 Z" fill="#000"/></svg>
<div class="a" style="left:42px;top:1842px;width:2880px;height:1px;background:#a0a0a0;"></div>
<div class="a" style="left:42px;top:1843px;width:2880px;height:39px;background:#f0f0f0;"></div>
<div class="a" style="left:45px;top:1846px;width:325px;height:33px;background:#f0f0f0;box-sizing:border-box;border-top:1px solid #a0a0a0;border-left:1px solid #a0a0a0;border-bottom:1px solid #fff;border-right:1px solid #fff;"></div>
<div class="a" style="left:376px;top:1846px;width:148px;height:33px;background:#f0f0f0;box-sizing:border-box;border-top:1px solid #a0a0a0;border-left:1px solid #a0a0a0;border-bottom:1px solid #fff;border-right:1px solid #fff;"></div>
<div class="a" style="left:529px;top:1846px;width:389px;height:33px;background:#f0f0f0;box-sizing:border-box;border-top:1px solid #a0a0a0;border-left:1px solid #a0a0a0;border-bottom:1px solid #fff;border-right:1px solid #fff;"></div>
<div class="a" style="left:923px;top:1846px;width:1980px;height:33px;background:#f0f0f0;box-sizing:border-box;border-top:1px solid #a0a0a0;border-left:1px solid #a0a0a0;border-bottom:1px solid #fff;border-right:1px solid #fff;"></div>
<div class="t" style="top:1853.50px;font-family:'Liberation Sans',sans-serif;font-size:21px;line-height:21px;color:#000;left:51.25px;">0&nbsp;ps&nbsp;to&nbsp;21&nbsp;ns</div>
<div class="t" style="top:1853.50px;font-family:'Liberation Sans',sans-serif;font-size:21px;line-height:21px;color:#000;left:379px;">Project&nbsp;:&nbsp;verilog</div>
<div class="t" style="top:1853.50px;font-family:'Liberation Sans',sans-serif;font-size:21px;line-height:21px;color:#000;left:532.5px;">Now:&nbsp;20&nbsp;ns</div>
<div class="t" style="top:1853.50px;font-family:'Liberation Sans',sans-serif;font-size:21px;line-height:21px;color:#000;left:653.75px;">Delta:&nbsp;0</div>
<div class="t" style="top:1853.50px;font-family:'Liberation Sans',sans-serif;font-size:21px;line-height:21px;color:#000;left:926.25px;">sim:/tb_pic_ram/#INITIAL#18</div>
<svg class="a" style="left:2908px;top:1868px;" width="13" height="13" viewBox="0 0 13 13"><path d="M12 2 L2 12 M12 6 L6 12 M12 10 L10 12" stroke="#999" stroke-width="1.2"/></svg>
</body></html>
